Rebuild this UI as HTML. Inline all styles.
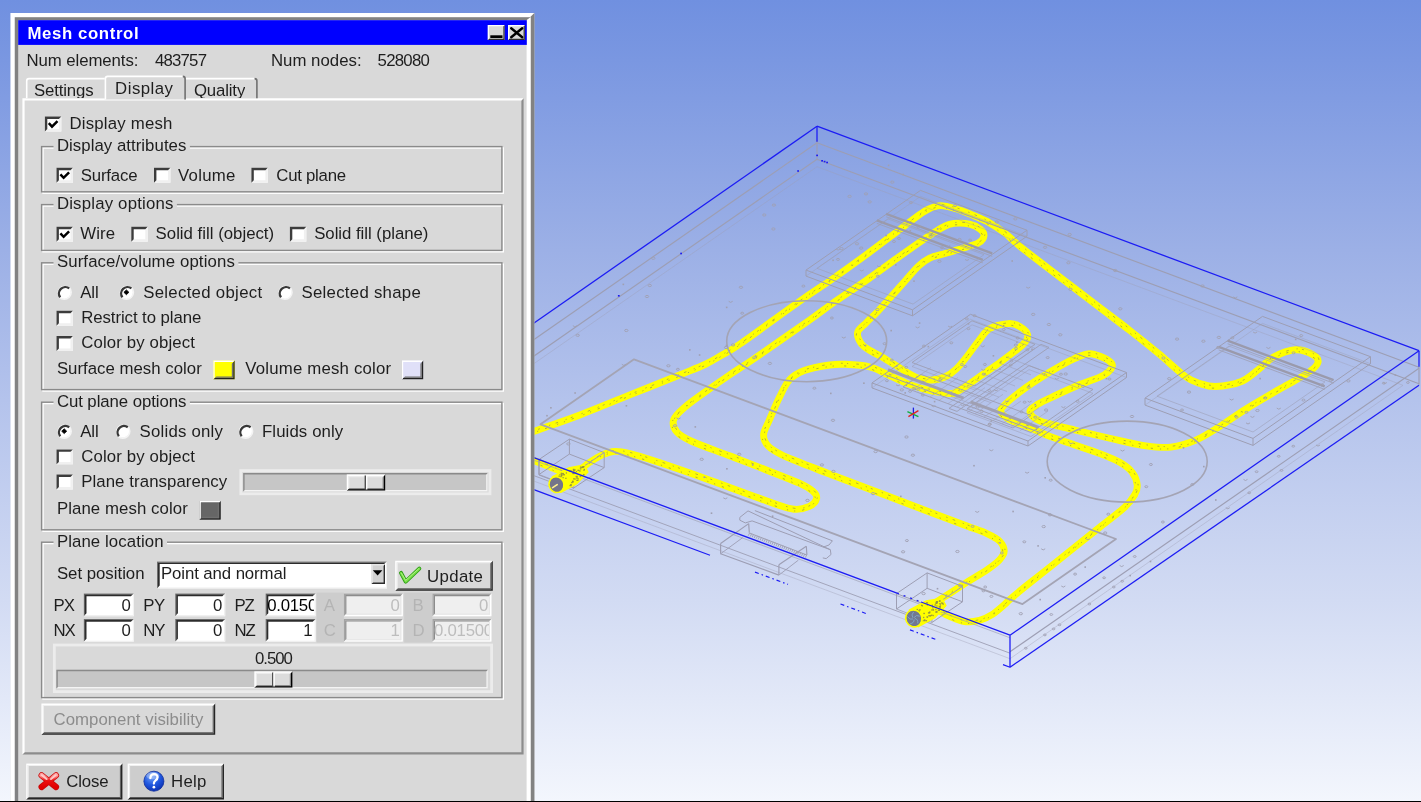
<!DOCTYPE html>
<html><head><meta charset="utf-8"><title>Mesh control</title>
<style>
html,body{margin:0;padding:0;}
body{width:1421px;height:802px;overflow:hidden;position:relative;background:#fff;font-family:"Liberation Sans",sans-serif;}
#bg{position:absolute;left:0;top:0;width:1421px;height:802px;background:linear-gradient(to bottom,#7090e0 0px,#7a97e1 60px,#9cb0e6 250px,#b4c3ec 400px,#d2dbf3 600px,#f3f6fd 801px);}
#scene{position:absolute;left:0;top:0;}
#dlg{position:absolute;left:0;top:0;}
.t{position:absolute;font-family:"Liberation Sans",sans-serif;font-size:16.8px;line-height:20px;white-space:nowrap;color:#1e1e1e;}
.gl{background:#d9d9d9;padding:0 3px;height:16px;line-height:20px;overflow:visible;}
#txt{position:absolute;left:0;top:0;width:540px;height:802px;filter:blur(0.35px);}
#dlg{filter:blur(0.3px);}
#scene{filter:blur(0.4px);}
#bl{position:absolute;left:0;top:801px;width:1421px;height:1px;background:#000;}
</style></head><body>
<div id="bg"></div>
<svg id="scene" width="1421" height="802" viewBox="0 0 1421 802">
<path d="M516.0 438.0 C519.2 436.9 524.4 435.0 535.0 431.1 C545.6 427.2 564.1 420.9 579.9 414.9 C595.7 408.9 613.2 401.5 629.8 394.9 C646.4 388.2 667.1 380.1 679.6 375.0 C692.1 369.9 697.9 367.8 705.0 364.5 C712.1 361.2 716.2 358.4 722.0 355.0 C727.8 351.6 727.0 353.0 740.0 344.0 C753.0 335.0 784.6 311.8 800.0 301.0 C815.4 290.2 821.6 286.5 832.4 279.0 C843.2 271.5 854.0 263.7 864.8 255.8 C875.6 247.9 889.1 237.6 897.2 231.5 C905.3 225.4 908.5 222.7 913.5 219.0 C918.5 215.3 923.0 211.8 927.5 209.6 C932.0 207.4 935.8 205.7 940.5 205.6 C945.2 205.5 950.9 207.3 956.0 208.8 C961.1 210.3 965.4 212.1 971.0 214.4 C976.6 216.8 984.1 219.8 989.7 222.9 C995.3 226.0 999.7 229.0 1004.7 232.9 C1009.8 236.8 1010.8 239.0 1020.0 246.4 C1029.2 253.8 1046.7 267.0 1060.0 277.2 C1073.3 287.4 1088.3 298.9 1100.0 307.8 C1111.7 316.7 1120.3 323.0 1130.0 330.6 C1139.7 338.2 1149.1 345.7 1158.4 353.4 C1167.7 361.1 1178.9 371.8 1185.8 376.8 C1192.7 381.8 1195.0 381.9 1200.0 383.5 C1205.0 385.1 1209.0 386.8 1215.8 386.5 C1222.6 386.2 1233.6 384.6 1240.7 381.8 C1247.8 379.0 1252.8 373.9 1258.2 369.8 C1263.6 365.7 1266.9 360.6 1273.1 357.3 C1279.3 354.0 1288.9 350.2 1295.6 349.8 C1302.2 349.4 1309.3 352.7 1313.0 354.8 C1316.7 356.9 1318.8 359.3 1318.0 362.3 C1317.2 365.3 1314.2 368.4 1308.0 372.8 C1301.8 377.2 1291.0 382.5 1280.6 388.6 C1270.2 394.7 1255.7 403.0 1245.7 409.2 C1235.7 415.4 1229.1 420.6 1220.8 425.8 C1212.5 431.0 1204.1 436.6 1195.8 440.2 C1187.5 443.8 1179.2 446.2 1170.9 447.1 C1162.6 448.0 1154.2 446.9 1145.9 445.8 C1137.6 444.8 1132.8 443.4 1121.0 440.8 C1109.2 438.2 1088.3 433.3 1074.8 430.0 C1061.3 426.7 1047.5 424.0 1040.0 421.0 C1032.5 418.0 1030.5 414.9 1030.0 412.2 C1029.5 409.5 1032.9 407.4 1037.0 404.7 C1041.1 402.0 1047.3 399.3 1054.4 396.0 C1061.5 392.7 1071.1 388.3 1079.4 384.8 C1087.7 381.3 1098.9 378.3 1104.3 374.8 C1109.7 371.3 1113.9 367.1 1111.8 363.6 C1109.7 360.1 1098.0 354.6 1091.8 353.8 C1085.6 353.0 1081.5 355.5 1074.4 358.6 C1067.4 361.7 1058.7 366.7 1049.5 372.3 C1040.3 377.9 1027.6 386.1 1019.5 392.3 C1011.4 398.5 1002.6 405.1 1001.0 409.7 C999.4 414.3 1005.6 417.1 1009.6 419.7 C1013.6 422.3 1018.3 422.7 1025.0 425.5 C1031.7 428.3 1041.6 433.2 1049.9 436.4 C1058.2 439.6 1066.5 442.0 1074.8 444.9 C1083.1 447.8 1092.3 450.7 1099.8 453.6 C1107.3 456.5 1114.3 459.2 1119.7 462.3 C1125.1 465.4 1129.3 468.6 1132.2 472.3 C1135.1 476.1 1136.8 481.1 1137.2 484.8 C1137.6 488.6 1136.8 491.1 1134.7 494.8 C1132.6 498.5 1130.5 501.8 1124.7 507.2 C1118.9 512.6 1108.1 520.6 1099.8 527.2 C1091.5 533.9 1083.1 540.5 1074.8 547.1 C1066.5 553.8 1058.2 560.5 1049.9 567.1 C1041.6 573.7 1031.7 581.4 1025.0 586.8 C1018.4 592.2 1013.4 596.3 1010.0 599.3 C1006.6 602.3 1007.4 602.1 1004.4 604.7 C1001.4 607.3 996.1 612.1 992.0 614.7 C987.9 617.3 984.1 619.2 979.5 620.4 C974.9 621.5 969.5 622.3 964.5 621.6 C959.5 620.9 954.6 618.5 949.6 616.4 C944.6 614.3 938.5 609.8 934.6 609.2 C930.7 608.6 927.4 612.4 926.0 613.0" fill="none" stroke="#ffff00" stroke-width="6.9" stroke-linecap="round" stroke-linejoin="round"/>
<path d="M566.0 478.0 C568.3 476.6 575.9 472.3 579.9 469.7 C583.9 467.1 586.2 464.7 589.9 462.2 C593.6 459.7 598.1 456.6 602.3 454.8 C606.4 453.0 610.2 451.6 614.8 451.4 C619.4 451.2 623.1 451.9 629.8 453.5 C636.4 455.1 642.2 456.9 654.7 461.0 C667.2 465.1 688.0 472.3 704.6 478.2 C721.2 484.1 739.9 491.3 754.4 496.4 C768.9 501.5 782.6 507.2 791.8 508.9 C800.9 510.6 805.2 508.1 809.3 506.4 C813.4 504.6 816.0 500.9 816.6 498.4 C817.2 495.9 815.7 493.7 812.8 491.2 C809.9 488.7 806.9 486.7 799.3 483.2 C791.6 479.7 778.5 474.8 766.9 470.2 C755.3 465.6 742.0 460.6 729.5 455.8 C717.0 451.0 700.8 445.4 692.1 441.5 C683.4 437.6 680.2 435.9 677.1 432.3 C674.0 428.7 672.4 424.0 673.6 419.9 C674.9 415.8 679.4 412.0 684.6 407.4 C689.8 402.8 697.1 397.8 704.6 392.4 C712.1 387.0 721.2 380.6 729.5 375.0 C737.8 369.4 741.0 367.7 754.4 358.5 C767.8 349.3 796.7 329.2 809.7 320.0 C822.7 310.8 823.2 309.9 832.4 303.5 C841.6 297.1 854.0 289.0 864.8 281.4 C875.6 273.8 886.4 265.8 897.2 258.1 C908.0 250.4 922.1 240.5 929.7 235.4 C937.3 230.3 938.6 229.3 942.6 227.3 C946.6 225.3 949.5 223.9 954.0 223.4 C958.5 222.9 965.2 223.2 969.6 224.2 C974.0 225.2 977.9 227.3 980.3 229.2 C982.7 231.1 984.2 233.3 984.0 235.6 C983.8 237.8 981.9 240.7 978.8 242.7 C975.7 244.7 970.8 245.8 965.3 247.5 C959.8 249.2 951.8 251.4 945.9 253.2 C940.0 255.0 934.3 255.9 929.7 258.1 C925.1 260.3 922.4 262.4 918.3 266.2 C914.2 270.0 909.9 275.7 905.3 280.8 C900.7 285.9 895.4 291.9 890.8 297.0 C886.2 302.1 881.9 307.1 877.8 311.4 C873.7 315.7 869.8 319.1 866.4 322.6 C863.0 326.1 858.4 328.8 857.6 332.4 C856.8 336.0 859.4 341.0 861.5 344.0 C863.6 347.0 866.7 348.4 870.0 350.5 C873.3 352.6 877.2 354.3 881.2 356.6 C885.2 358.9 888.4 361.0 894.3 364.5 C900.2 368.0 910.6 375.0 916.8 377.6 C923.0 380.2 927.0 380.1 931.7 380.0 C936.4 379.9 940.8 378.8 944.8 377.0 C948.8 375.2 952.2 372.7 956.0 369.2 C959.8 365.7 963.5 360.8 967.3 356.1 C971.0 351.4 974.8 345.8 978.5 341.2 C982.2 336.6 984.7 331.5 989.7 328.6 C994.7 325.7 1003.4 324.0 1008.4 323.6 C1013.4 323.2 1016.4 324.6 1019.6 326.4 C1022.8 328.2 1027.0 331.7 1027.6 334.6 C1028.2 337.5 1027.8 339.5 1023.4 344.0 C1019.0 348.5 1007.8 356.6 1000.9 361.7 C994.0 366.8 988.4 370.4 982.2 374.8 C976.0 379.2 968.3 384.8 963.5 387.9 C958.7 391.0 954.9 392.5 953.2 393.4" fill="none" stroke="#ffff00" stroke-width="6.9" stroke-linecap="round" stroke-linejoin="round"/>
<path d="M953.2 393.4 C951.8 393.4 949.3 393.8 944.8 393.2 C940.3 392.6 932.3 391.2 926.1 389.6 C919.9 388.0 913.6 386.0 907.4 383.6 C901.2 381.2 894.9 378.0 888.7 375.2 C882.5 372.4 877.3 368.8 870.0 367.0 C862.7 365.2 851.7 364.6 845.0 364.3 C838.3 364.0 836.8 364.0 830.0 365.0 C823.2 366.0 811.1 368.0 804.3 370.5 C797.5 373.0 793.5 375.5 789.4 380.0 C785.2 384.5 782.7 390.8 779.4 397.4 C776.1 404.0 772.0 413.7 769.4 419.9 C766.8 426.1 763.8 430.4 763.6 434.8 C763.4 439.2 765.3 442.9 768.4 446.3 C771.5 449.7 776.7 452.3 782.0 455.0 C787.3 457.7 790.8 458.8 800.0 462.5 C809.2 466.2 824.1 471.9 837.4 477.0 C850.7 482.1 864.4 487.2 879.8 493.0 C895.2 498.8 915.1 506.5 929.6 512.0 C944.1 517.5 957.4 522.4 967.0 526.0 C976.6 529.6 981.6 531.1 987.0 533.6 C992.4 536.1 996.6 538.2 999.5 541.1 C1002.4 544.0 1004.2 548.0 1004.2 551.1 C1004.2 554.2 1002.4 556.7 999.5 559.8 C996.6 562.9 992.4 566.1 987.0 569.8 C981.6 573.5 973.2 578.2 967.0 582.2 C960.8 586.2 955.0 590.0 949.6 593.5 C944.2 597.0 938.7 600.5 934.6 603.2 C930.5 606.0 926.6 608.9 925.0 610.0" fill="none" stroke="#ffff00" stroke-width="6.9" stroke-linecap="round" stroke-linejoin="round"/>
<path d="M520.0 455.8 C523.3 457.0 532.3 460.1 540.0 463.0 C547.7 465.9 561.7 471.8 566.0 473.5" fill="none" stroke="#ffff00" stroke-width="6.9" stroke-linecap="round" stroke-linejoin="round"/>
<path d="M516.0 438.0 C519.2 436.9 524.4 435.0 535.0 431.1 C545.6 427.2 564.1 420.9 579.9 414.9 C595.7 408.9 613.2 401.5 629.8 394.9 C646.4 388.2 667.1 380.1 679.6 375.0 C692.1 369.9 697.9 367.8 705.0 364.5 C712.1 361.2 716.2 358.4 722.0 355.0 C727.8 351.6 727.0 353.0 740.0 344.0 C753.0 335.0 784.6 311.8 800.0 301.0 C815.4 290.2 821.6 286.5 832.4 279.0 C843.2 271.5 854.0 263.7 864.8 255.8 C875.6 247.9 889.1 237.6 897.2 231.5 C905.3 225.4 908.5 222.7 913.5 219.0 C918.5 215.3 923.0 211.8 927.5 209.6 C932.0 207.4 935.8 205.7 940.5 205.6 C945.2 205.5 950.9 207.3 956.0 208.8 C961.1 210.3 965.4 212.1 971.0 214.4 C976.6 216.8 984.1 219.8 989.7 222.9 C995.3 226.0 999.7 229.0 1004.7 232.9 C1009.8 236.8 1010.8 239.0 1020.0 246.4 C1029.2 253.8 1046.7 267.0 1060.0 277.2 C1073.3 287.4 1088.3 298.9 1100.0 307.8 C1111.7 316.7 1120.3 323.0 1130.0 330.6 C1139.7 338.2 1149.1 345.7 1158.4 353.4 C1167.7 361.1 1178.9 371.8 1185.8 376.8 C1192.7 381.8 1195.0 381.9 1200.0 383.5 C1205.0 385.1 1209.0 386.8 1215.8 386.5 C1222.6 386.2 1233.6 384.6 1240.7 381.8 C1247.8 379.0 1252.8 373.9 1258.2 369.8 C1263.6 365.7 1266.9 360.6 1273.1 357.3 C1279.3 354.0 1288.9 350.2 1295.6 349.8 C1302.2 349.4 1309.3 352.7 1313.0 354.8 C1316.7 356.9 1318.8 359.3 1318.0 362.3 C1317.2 365.3 1314.2 368.4 1308.0 372.8 C1301.8 377.2 1291.0 382.5 1280.6 388.6 C1270.2 394.7 1255.7 403.0 1245.7 409.2 C1235.7 415.4 1229.1 420.6 1220.8 425.8 C1212.5 431.0 1204.1 436.6 1195.8 440.2 C1187.5 443.8 1179.2 446.2 1170.9 447.1 C1162.6 448.0 1154.2 446.9 1145.9 445.8 C1137.6 444.8 1132.8 443.4 1121.0 440.8 C1109.2 438.2 1088.3 433.3 1074.8 430.0 C1061.3 426.7 1047.5 424.0 1040.0 421.0 C1032.5 418.0 1030.5 414.9 1030.0 412.2 C1029.5 409.5 1032.9 407.4 1037.0 404.7 C1041.1 402.0 1047.3 399.3 1054.4 396.0 C1061.5 392.7 1071.1 388.3 1079.4 384.8 C1087.7 381.3 1098.9 378.3 1104.3 374.8 C1109.7 371.3 1113.9 367.1 1111.8 363.6 C1109.7 360.1 1098.0 354.6 1091.8 353.8 C1085.6 353.0 1081.5 355.5 1074.4 358.6 C1067.4 361.7 1058.7 366.7 1049.5 372.3 C1040.3 377.9 1027.6 386.1 1019.5 392.3 C1011.4 398.5 1002.6 405.1 1001.0 409.7 C999.4 414.3 1005.6 417.1 1009.6 419.7 C1013.6 422.3 1018.3 422.7 1025.0 425.5 C1031.7 428.3 1041.6 433.2 1049.9 436.4 C1058.2 439.6 1066.5 442.0 1074.8 444.9 C1083.1 447.8 1092.3 450.7 1099.8 453.6 C1107.3 456.5 1114.3 459.2 1119.7 462.3 C1125.1 465.4 1129.3 468.6 1132.2 472.3 C1135.1 476.1 1136.8 481.1 1137.2 484.8 C1137.6 488.6 1136.8 491.1 1134.7 494.8 C1132.6 498.5 1130.5 501.8 1124.7 507.2 C1118.9 512.6 1108.1 520.6 1099.8 527.2 C1091.5 533.9 1083.1 540.5 1074.8 547.1 C1066.5 553.8 1058.2 560.5 1049.9 567.1 C1041.6 573.7 1031.7 581.4 1025.0 586.8 C1018.4 592.2 1013.4 596.3 1010.0 599.3 C1006.6 602.3 1007.4 602.1 1004.4 604.7 C1001.4 607.3 996.1 612.1 992.0 614.7 C987.9 617.3 984.1 619.2 979.5 620.4 C974.9 621.5 969.5 622.3 964.5 621.6 C959.5 620.9 954.6 618.5 949.6 616.4 C944.6 614.3 938.5 609.8 934.6 609.2 C930.7 608.6 927.4 612.4 926.0 613.0" fill="none" stroke="#8e8e4c" stroke-width="0.9" stroke-dasharray="1.4 5.5 2.6 8 1.2 4.2 2.0 9.5" stroke-dashoffset="0" transform="translate(0.8,-0.9)" opacity="0.7"/>
<path d="M516.0 438.0 C519.2 436.9 524.4 435.0 535.0 431.1 C545.6 427.2 564.1 420.9 579.9 414.9 C595.7 408.9 613.2 401.5 629.8 394.9 C646.4 388.2 667.1 380.1 679.6 375.0 C692.1 369.9 697.9 367.8 705.0 364.5 C712.1 361.2 716.2 358.4 722.0 355.0 C727.8 351.6 727.0 353.0 740.0 344.0 C753.0 335.0 784.6 311.8 800.0 301.0 C815.4 290.2 821.6 286.5 832.4 279.0 C843.2 271.5 854.0 263.7 864.8 255.8 C875.6 247.9 889.1 237.6 897.2 231.5 C905.3 225.4 908.5 222.7 913.5 219.0 C918.5 215.3 923.0 211.8 927.5 209.6 C932.0 207.4 935.8 205.7 940.5 205.6 C945.2 205.5 950.9 207.3 956.0 208.8 C961.1 210.3 965.4 212.1 971.0 214.4 C976.6 216.8 984.1 219.8 989.7 222.9 C995.3 226.0 999.7 229.0 1004.7 232.9 C1009.8 236.8 1010.8 239.0 1020.0 246.4 C1029.2 253.8 1046.7 267.0 1060.0 277.2 C1073.3 287.4 1088.3 298.9 1100.0 307.8 C1111.7 316.7 1120.3 323.0 1130.0 330.6 C1139.7 338.2 1149.1 345.7 1158.4 353.4 C1167.7 361.1 1178.9 371.8 1185.8 376.8 C1192.7 381.8 1195.0 381.9 1200.0 383.5 C1205.0 385.1 1209.0 386.8 1215.8 386.5 C1222.6 386.2 1233.6 384.6 1240.7 381.8 C1247.8 379.0 1252.8 373.9 1258.2 369.8 C1263.6 365.7 1266.9 360.6 1273.1 357.3 C1279.3 354.0 1288.9 350.2 1295.6 349.8 C1302.2 349.4 1309.3 352.7 1313.0 354.8 C1316.7 356.9 1318.8 359.3 1318.0 362.3 C1317.2 365.3 1314.2 368.4 1308.0 372.8 C1301.8 377.2 1291.0 382.5 1280.6 388.6 C1270.2 394.7 1255.7 403.0 1245.7 409.2 C1235.7 415.4 1229.1 420.6 1220.8 425.8 C1212.5 431.0 1204.1 436.6 1195.8 440.2 C1187.5 443.8 1179.2 446.2 1170.9 447.1 C1162.6 448.0 1154.2 446.9 1145.9 445.8 C1137.6 444.8 1132.8 443.4 1121.0 440.8 C1109.2 438.2 1088.3 433.3 1074.8 430.0 C1061.3 426.7 1047.5 424.0 1040.0 421.0 C1032.5 418.0 1030.5 414.9 1030.0 412.2 C1029.5 409.5 1032.9 407.4 1037.0 404.7 C1041.1 402.0 1047.3 399.3 1054.4 396.0 C1061.5 392.7 1071.1 388.3 1079.4 384.8 C1087.7 381.3 1098.9 378.3 1104.3 374.8 C1109.7 371.3 1113.9 367.1 1111.8 363.6 C1109.7 360.1 1098.0 354.6 1091.8 353.8 C1085.6 353.0 1081.5 355.5 1074.4 358.6 C1067.4 361.7 1058.7 366.7 1049.5 372.3 C1040.3 377.9 1027.6 386.1 1019.5 392.3 C1011.4 398.5 1002.6 405.1 1001.0 409.7 C999.4 414.3 1005.6 417.1 1009.6 419.7 C1013.6 422.3 1018.3 422.7 1025.0 425.5 C1031.7 428.3 1041.6 433.2 1049.9 436.4 C1058.2 439.6 1066.5 442.0 1074.8 444.9 C1083.1 447.8 1092.3 450.7 1099.8 453.6 C1107.3 456.5 1114.3 459.2 1119.7 462.3 C1125.1 465.4 1129.3 468.6 1132.2 472.3 C1135.1 476.1 1136.8 481.1 1137.2 484.8 C1137.6 488.6 1136.8 491.1 1134.7 494.8 C1132.6 498.5 1130.5 501.8 1124.7 507.2 C1118.9 512.6 1108.1 520.6 1099.8 527.2 C1091.5 533.9 1083.1 540.5 1074.8 547.1 C1066.5 553.8 1058.2 560.5 1049.9 567.1 C1041.6 573.7 1031.7 581.4 1025.0 586.8 C1018.4 592.2 1013.4 596.3 1010.0 599.3 C1006.6 602.3 1007.4 602.1 1004.4 604.7 C1001.4 607.3 996.1 612.1 992.0 614.7 C987.9 617.3 984.1 619.2 979.5 620.4 C974.9 621.5 969.5 622.3 964.5 621.6 C959.5 620.9 954.6 618.5 949.6 616.4 C944.6 614.3 938.5 609.8 934.6 609.2 C930.7 608.6 927.4 612.4 926.0 613.0" fill="none" stroke="#8c8c44" stroke-width="1.0" stroke-dasharray="1.2 7 2.2 10.5 1.2 6" stroke-dashoffset="4" transform="translate(-1.2,1.6)" opacity="0.65"/>
<path d="M566.0 478.0 C568.3 476.6 575.9 472.3 579.9 469.7 C583.9 467.1 586.2 464.7 589.9 462.2 C593.6 459.7 598.1 456.6 602.3 454.8 C606.4 453.0 610.2 451.6 614.8 451.4 C619.4 451.2 623.1 451.9 629.8 453.5 C636.4 455.1 642.2 456.9 654.7 461.0 C667.2 465.1 688.0 472.3 704.6 478.2 C721.2 484.1 739.9 491.3 754.4 496.4 C768.9 501.5 782.6 507.2 791.8 508.9 C800.9 510.6 805.2 508.1 809.3 506.4 C813.4 504.6 816.0 500.9 816.6 498.4 C817.2 495.9 815.7 493.7 812.8 491.2 C809.9 488.7 806.9 486.7 799.3 483.2 C791.6 479.7 778.5 474.8 766.9 470.2 C755.3 465.6 742.0 460.6 729.5 455.8 C717.0 451.0 700.8 445.4 692.1 441.5 C683.4 437.6 680.2 435.9 677.1 432.3 C674.0 428.7 672.4 424.0 673.6 419.9 C674.9 415.8 679.4 412.0 684.6 407.4 C689.8 402.8 697.1 397.8 704.6 392.4 C712.1 387.0 721.2 380.6 729.5 375.0 C737.8 369.4 741.0 367.7 754.4 358.5 C767.8 349.3 796.7 329.2 809.7 320.0 C822.7 310.8 823.2 309.9 832.4 303.5 C841.6 297.1 854.0 289.0 864.8 281.4 C875.6 273.8 886.4 265.8 897.2 258.1 C908.0 250.4 922.1 240.5 929.7 235.4 C937.3 230.3 938.6 229.3 942.6 227.3 C946.6 225.3 949.5 223.9 954.0 223.4 C958.5 222.9 965.2 223.2 969.6 224.2 C974.0 225.2 977.9 227.3 980.3 229.2 C982.7 231.1 984.2 233.3 984.0 235.6 C983.8 237.8 981.9 240.7 978.8 242.7 C975.7 244.7 970.8 245.8 965.3 247.5 C959.8 249.2 951.8 251.4 945.9 253.2 C940.0 255.0 934.3 255.9 929.7 258.1 C925.1 260.3 922.4 262.4 918.3 266.2 C914.2 270.0 909.9 275.7 905.3 280.8 C900.7 285.9 895.4 291.9 890.8 297.0 C886.2 302.1 881.9 307.1 877.8 311.4 C873.7 315.7 869.8 319.1 866.4 322.6 C863.0 326.1 858.4 328.8 857.6 332.4 C856.8 336.0 859.4 341.0 861.5 344.0 C863.6 347.0 866.7 348.4 870.0 350.5 C873.3 352.6 877.2 354.3 881.2 356.6 C885.2 358.9 888.4 361.0 894.3 364.5 C900.2 368.0 910.6 375.0 916.8 377.6 C923.0 380.2 927.0 380.1 931.7 380.0 C936.4 379.9 940.8 378.8 944.8 377.0 C948.8 375.2 952.2 372.7 956.0 369.2 C959.8 365.7 963.5 360.8 967.3 356.1 C971.0 351.4 974.8 345.8 978.5 341.2 C982.2 336.6 984.7 331.5 989.7 328.6 C994.7 325.7 1003.4 324.0 1008.4 323.6 C1013.4 323.2 1016.4 324.6 1019.6 326.4 C1022.8 328.2 1027.0 331.7 1027.6 334.6 C1028.2 337.5 1027.8 339.5 1023.4 344.0 C1019.0 348.5 1007.8 356.6 1000.9 361.7 C994.0 366.8 988.4 370.4 982.2 374.8 C976.0 379.2 968.3 384.8 963.5 387.9 C958.7 391.0 954.9 392.5 953.2 393.4" fill="none" stroke="#8e8e4c" stroke-width="0.9" stroke-dasharray="1.4 5.5 2.6 8 1.2 4.2 2.0 9.5" stroke-dashoffset="5" transform="translate(0.8,-0.9)" opacity="0.7"/>
<path d="M566.0 478.0 C568.3 476.6 575.9 472.3 579.9 469.7 C583.9 467.1 586.2 464.7 589.9 462.2 C593.6 459.7 598.1 456.6 602.3 454.8 C606.4 453.0 610.2 451.6 614.8 451.4 C619.4 451.2 623.1 451.9 629.8 453.5 C636.4 455.1 642.2 456.9 654.7 461.0 C667.2 465.1 688.0 472.3 704.6 478.2 C721.2 484.1 739.9 491.3 754.4 496.4 C768.9 501.5 782.6 507.2 791.8 508.9 C800.9 510.6 805.2 508.1 809.3 506.4 C813.4 504.6 816.0 500.9 816.6 498.4 C817.2 495.9 815.7 493.7 812.8 491.2 C809.9 488.7 806.9 486.7 799.3 483.2 C791.6 479.7 778.5 474.8 766.9 470.2 C755.3 465.6 742.0 460.6 729.5 455.8 C717.0 451.0 700.8 445.4 692.1 441.5 C683.4 437.6 680.2 435.9 677.1 432.3 C674.0 428.7 672.4 424.0 673.6 419.9 C674.9 415.8 679.4 412.0 684.6 407.4 C689.8 402.8 697.1 397.8 704.6 392.4 C712.1 387.0 721.2 380.6 729.5 375.0 C737.8 369.4 741.0 367.7 754.4 358.5 C767.8 349.3 796.7 329.2 809.7 320.0 C822.7 310.8 823.2 309.9 832.4 303.5 C841.6 297.1 854.0 289.0 864.8 281.4 C875.6 273.8 886.4 265.8 897.2 258.1 C908.0 250.4 922.1 240.5 929.7 235.4 C937.3 230.3 938.6 229.3 942.6 227.3 C946.6 225.3 949.5 223.9 954.0 223.4 C958.5 222.9 965.2 223.2 969.6 224.2 C974.0 225.2 977.9 227.3 980.3 229.2 C982.7 231.1 984.2 233.3 984.0 235.6 C983.8 237.8 981.9 240.7 978.8 242.7 C975.7 244.7 970.8 245.8 965.3 247.5 C959.8 249.2 951.8 251.4 945.9 253.2 C940.0 255.0 934.3 255.9 929.7 258.1 C925.1 260.3 922.4 262.4 918.3 266.2 C914.2 270.0 909.9 275.7 905.3 280.8 C900.7 285.9 895.4 291.9 890.8 297.0 C886.2 302.1 881.9 307.1 877.8 311.4 C873.7 315.7 869.8 319.1 866.4 322.6 C863.0 326.1 858.4 328.8 857.6 332.4 C856.8 336.0 859.4 341.0 861.5 344.0 C863.6 347.0 866.7 348.4 870.0 350.5 C873.3 352.6 877.2 354.3 881.2 356.6 C885.2 358.9 888.4 361.0 894.3 364.5 C900.2 368.0 910.6 375.0 916.8 377.6 C923.0 380.2 927.0 380.1 931.7 380.0 C936.4 379.9 940.8 378.8 944.8 377.0 C948.8 375.2 952.2 372.7 956.0 369.2 C959.8 365.7 963.5 360.8 967.3 356.1 C971.0 351.4 974.8 345.8 978.5 341.2 C982.2 336.6 984.7 331.5 989.7 328.6 C994.7 325.7 1003.4 324.0 1008.4 323.6 C1013.4 323.2 1016.4 324.6 1019.6 326.4 C1022.8 328.2 1027.0 331.7 1027.6 334.6 C1028.2 337.5 1027.8 339.5 1023.4 344.0 C1019.0 348.5 1007.8 356.6 1000.9 361.7 C994.0 366.8 988.4 370.4 982.2 374.8 C976.0 379.2 968.3 384.8 963.5 387.9 C958.7 391.0 954.9 392.5 953.2 393.4" fill="none" stroke="#8c8c44" stroke-width="1.0" stroke-dasharray="1.2 7 2.2 10.5 1.2 6" stroke-dashoffset="7" transform="translate(-1.2,1.6)" opacity="0.65"/>
<path d="M953.2 393.4 C951.8 393.4 949.3 393.8 944.8 393.2 C940.3 392.6 932.3 391.2 926.1 389.6 C919.9 388.0 913.6 386.0 907.4 383.6 C901.2 381.2 894.9 378.0 888.7 375.2 C882.5 372.4 877.3 368.8 870.0 367.0 C862.7 365.2 851.7 364.6 845.0 364.3 C838.3 364.0 836.8 364.0 830.0 365.0 C823.2 366.0 811.1 368.0 804.3 370.5 C797.5 373.0 793.5 375.5 789.4 380.0 C785.2 384.5 782.7 390.8 779.4 397.4 C776.1 404.0 772.0 413.7 769.4 419.9 C766.8 426.1 763.8 430.4 763.6 434.8 C763.4 439.2 765.3 442.9 768.4 446.3 C771.5 449.7 776.7 452.3 782.0 455.0 C787.3 457.7 790.8 458.8 800.0 462.5 C809.2 466.2 824.1 471.9 837.4 477.0 C850.7 482.1 864.4 487.2 879.8 493.0 C895.2 498.8 915.1 506.5 929.6 512.0 C944.1 517.5 957.4 522.4 967.0 526.0 C976.6 529.6 981.6 531.1 987.0 533.6 C992.4 536.1 996.6 538.2 999.5 541.1 C1002.4 544.0 1004.2 548.0 1004.2 551.1 C1004.2 554.2 1002.4 556.7 999.5 559.8 C996.6 562.9 992.4 566.1 987.0 569.8 C981.6 573.5 973.2 578.2 967.0 582.2 C960.8 586.2 955.0 590.0 949.6 593.5 C944.2 597.0 938.7 600.5 934.6 603.2 C930.5 606.0 926.6 608.9 925.0 610.0" fill="none" stroke="#8e8e4c" stroke-width="0.9" stroke-dasharray="1.4 5.5 2.6 8 1.2 4.2 2.0 9.5" stroke-dashoffset="10" transform="translate(0.8,-0.9)" opacity="0.7"/>
<path d="M953.2 393.4 C951.8 393.4 949.3 393.8 944.8 393.2 C940.3 392.6 932.3 391.2 926.1 389.6 C919.9 388.0 913.6 386.0 907.4 383.6 C901.2 381.2 894.9 378.0 888.7 375.2 C882.5 372.4 877.3 368.8 870.0 367.0 C862.7 365.2 851.7 364.6 845.0 364.3 C838.3 364.0 836.8 364.0 830.0 365.0 C823.2 366.0 811.1 368.0 804.3 370.5 C797.5 373.0 793.5 375.5 789.4 380.0 C785.2 384.5 782.7 390.8 779.4 397.4 C776.1 404.0 772.0 413.7 769.4 419.9 C766.8 426.1 763.8 430.4 763.6 434.8 C763.4 439.2 765.3 442.9 768.4 446.3 C771.5 449.7 776.7 452.3 782.0 455.0 C787.3 457.7 790.8 458.8 800.0 462.5 C809.2 466.2 824.1 471.9 837.4 477.0 C850.7 482.1 864.4 487.2 879.8 493.0 C895.2 498.8 915.1 506.5 929.6 512.0 C944.1 517.5 957.4 522.4 967.0 526.0 C976.6 529.6 981.6 531.1 987.0 533.6 C992.4 536.1 996.6 538.2 999.5 541.1 C1002.4 544.0 1004.2 548.0 1004.2 551.1 C1004.2 554.2 1002.4 556.7 999.5 559.8 C996.6 562.9 992.4 566.1 987.0 569.8 C981.6 573.5 973.2 578.2 967.0 582.2 C960.8 586.2 955.0 590.0 949.6 593.5 C944.2 597.0 938.7 600.5 934.6 603.2 C930.5 606.0 926.6 608.9 925.0 610.0" fill="none" stroke="#8c8c44" stroke-width="1.0" stroke-dasharray="1.2 7 2.2 10.5 1.2 6" stroke-dashoffset="10" transform="translate(-1.2,1.6)" opacity="0.65"/>
<path d="M520.0 455.8 C523.3 457.0 532.3 460.1 540.0 463.0 C547.7 465.9 561.7 471.8 566.0 473.5" fill="none" stroke="#8e8e4c" stroke-width="0.9" stroke-dasharray="1.4 5.5 2.6 8 1.2 4.2 2.0 9.5" stroke-dashoffset="15" transform="translate(0.8,-0.9)" opacity="0.7"/>
<path d="M520.0 455.8 C523.3 457.0 532.3 460.1 540.0 463.0 C547.7 465.9 561.7 471.8 566.0 473.5" fill="none" stroke="#8c8c44" stroke-width="1.0" stroke-dasharray="1.2 7 2.2 10.5 1.2 6" stroke-dashoffset="13" transform="translate(-1.2,1.6)" opacity="0.65"/>
<line x1="817.0" y1="142.7" x2="408.0" y2="427.2" stroke="#9d9eb3" stroke-width="1.15" />
<line x1="817.0" y1="159.2" x2="408.0" y2="443.7" stroke="#9d9eb3" stroke-width="1.15" />
<line x1="817.0" y1="142.7" x2="1419.0" y2="367.2" stroke="#9d9eb3" stroke-width="1.15" />
<line x1="817.0" y1="159.2" x2="1419.0" y2="383.7" stroke="#9d9eb3" stroke-width="1.15" />
<line x1="817.0" y1="140.2" x2="817.0" y2="160.2" stroke="#9d9eb3" stroke-width="1.15" />
<line x1="1010.0" y1="651.7" x2="1419.0" y2="368.2" stroke="#9d9eb3" stroke-width="1.15" />
<line x1="1419.0" y1="366.7" x2="1419.0" y2="384.7" stroke="#9d9eb3" stroke-width="1.15" />
<path d="M817.0 166.7 L1403.0 385.3 L1010.0 658.7 L424.0 440.1 Z" fill="none" stroke="#9d9eb3" stroke-width="0.7" stroke-linejoin="round" opacity="0.55"/>
<path d="M634.0 359.3 L1116.0 539.0 L1022.5 604.1 L540.5 424.3 Z" fill="none" stroke="#a4a4b4" stroke-width="1.8" stroke-linejoin="round" />
<ellipse cx="806.7" cy="341.2" rx="80" ry="40.5" fill="none" stroke="#a4a4b4" stroke-width="1.6"/>
<ellipse cx="1127.2" cy="461.6" rx="80" ry="40.5" fill="none" stroke="#a4a4b4" stroke-width="1.6"/>
<path d="M920.5 190.4 L1027.0 230.2 L912.5 309.8 L806.0 270.1 Z" fill="none" stroke="#9d9eb3" stroke-width="1.0" stroke-linejoin="round" />
<path d="M806.0 270.1 L806.0 276.1 L912.5 315.8 L1027.0 236.2 L1027.0 230.2" fill="none" stroke="#9d9eb3" stroke-width="1.0" stroke-linejoin="round" />
<line x1="912.5" y1="309.8" x2="912.5" y2="315.8" stroke="#9d9eb3" stroke-width="1.0" />
<path d="M806.0 276.1 L920.5 196.4 L1027.0 236.2" fill="none" stroke="#9d9eb3" stroke-width="0.7" stroke-linejoin="round" opacity="0.6"/>
<path d="M1262.5 316.4 L1370.5 356.7 L1253.0 438.4 L1145.0 398.1 Z" fill="none" stroke="#9d9eb3" stroke-width="1.0" stroke-linejoin="round" />
<path d="M1145.0 398.1 L1145.0 405.1 L1253.0 445.4 L1370.5 363.7 L1370.5 356.7" fill="none" stroke="#9d9eb3" stroke-width="1.0" stroke-linejoin="round" />
<line x1="1253.0" y1="438.4" x2="1253.0" y2="445.4" stroke="#9d9eb3" stroke-width="1.0" />
<path d="M1145.0 405.1 L1262.5 323.4 L1370.5 363.7" fill="none" stroke="#9d9eb3" stroke-width="0.7" stroke-linejoin="round" opacity="0.6"/>
<line x1="886.2" y1="213.8" x2="992.2" y2="253.3" stroke="#9a9aac" stroke-width="2.3" />
<line x1="886.2" y1="216.8" x2="992.2" y2="256.3" stroke="#9d9eb3" stroke-width="0.8" />
<line x1="876.8" y1="220.3" x2="982.8" y2="259.8" stroke="#9a9aac" stroke-width="2.3" />
<line x1="876.8" y1="223.3" x2="982.8" y2="262.8" stroke="#9d9eb3" stroke-width="0.8" />
<line x1="1227.6" y1="340.7" x2="1333.6" y2="380.2" stroke="#9a9aac" stroke-width="2.3" />
<line x1="1227.6" y1="343.7" x2="1333.6" y2="383.2" stroke="#9d9eb3" stroke-width="0.8" />
<line x1="1218.7" y1="346.9" x2="1324.7" y2="386.4" stroke="#9a9aac" stroke-width="2.3" />
<line x1="1218.7" y1="349.9" x2="1324.7" y2="389.4" stroke="#9d9eb3" stroke-width="0.8" />
<path d="M888.0 218.9 L984.0 254.7 L913.0 304.1 L817.0 268.3 Z" fill="none" stroke="#9d9eb3" stroke-width="0.8" stroke-linejoin="round" opacity="0.7"/>
<path d="M1229.0 346.1 L1325.0 381.9 L1253.0 432.0 L1157.0 396.2 Z" fill="none" stroke="#9d9eb3" stroke-width="0.8" stroke-linejoin="round" opacity="0.7"/>
<path d="M970.5 314.3 L1126.5 372.5 L1028.0 441.0 L872.0 382.9 Z" fill="none" stroke="#9d9eb3" stroke-width="1.0" stroke-linejoin="round" />
<path d="M872.0 382.9 L872.0 387.9 L1028.0 446.0 L1126.5 377.5 L1126.5 372.5" fill="none" stroke="#9d9eb3" stroke-width="1.0" stroke-linejoin="round" />
<line x1="1028.0" y1="441.0" x2="1028.0" y2="446.0" stroke="#9d9eb3" stroke-width="1.0" />
<path d="M872.0 387.9 L970.5 319.3 L1126.5 377.5" fill="none" stroke="#9d9eb3" stroke-width="0.7" stroke-linejoin="round" opacity="0.6"/>
<path d="M972.0 320.8 L1035.0 344.3 L975.0 386.0 L912.0 362.5 Z" fill="none" stroke="#9d9eb3" stroke-width="0.9" stroke-linejoin="round" />
<path d="M972.0 324.8 L1035.0 348.3 L975.0 390.0 L912.0 366.5 Z" fill="none" stroke="#9d9eb3" stroke-width="0.7" stroke-linejoin="round" opacity="0.7"/>
<path d="M1029.0 365.6 L1093.0 389.4 L1031.0 432.5 L967.0 408.7 Z" fill="none" stroke="#9d9eb3" stroke-width="0.9" stroke-linejoin="round" />
<path d="M1029.0 369.6 L1093.0 393.4 L1031.0 436.5 L967.0 412.7 Z" fill="none" stroke="#9d9eb3" stroke-width="0.7" stroke-linejoin="round" opacity="0.7"/>
<path d="M921.0 374.4 L1031.0 415.4 L1013.0 428.0 L903.0 386.9 Z" fill="none" stroke="#9d9eb3" stroke-width="0.9" stroke-linejoin="round" />
<path d="M1041.0 344.4 L1049.0 347.4 L957.0 411.4 L949.0 408.4 Z" fill="none" stroke="#9d9eb3" stroke-width="0.9" stroke-linejoin="round" />
<line x1="888.0" y1="369.6" x2="963.6" y2="398.2" stroke="#a0a0b2" stroke-width="3.0" />
<line x1="970.6" y1="401.9" x2="1038.6" y2="427.3" stroke="#a0a0b2" stroke-width="3.0" />
<line x1="885.0" y1="374.7" x2="1041.0" y2="432.9" stroke="#9d9eb3" stroke-width="1.0" />
<line x1="931.0" y1="367.5" x2="903.0" y2="386.9" stroke="#9d9eb3" stroke-width="0.7" opacity="0.7"/>
<line x1="940.0" y1="370.8" x2="912.0" y2="390.3" stroke="#9d9eb3" stroke-width="0.7" opacity="0.7"/>
<line x1="949.0" y1="374.2" x2="921.0" y2="393.7" stroke="#9d9eb3" stroke-width="0.7" opacity="0.7"/>
<line x1="958.0" y1="377.5" x2="930.0" y2="397.0" stroke="#9d9eb3" stroke-width="0.7" opacity="0.7"/>
<line x1="967.0" y1="380.9" x2="939.0" y2="400.4" stroke="#9d9eb3" stroke-width="0.7" opacity="0.7"/>
<line x1="976.0" y1="384.2" x2="948.0" y2="403.7" stroke="#9d9eb3" stroke-width="0.7" opacity="0.7"/>
<line x1="985.0" y1="387.6" x2="957.0" y2="407.1" stroke="#9d9eb3" stroke-width="0.7" opacity="0.7"/>
<line x1="994.0" y1="391.0" x2="966.0" y2="410.4" stroke="#9d9eb3" stroke-width="0.7" opacity="0.7"/>
<line x1="1003.0" y1="394.3" x2="975.0" y2="413.8" stroke="#9d9eb3" stroke-width="0.7" opacity="0.7"/>
<line x1="1012.0" y1="397.7" x2="984.0" y2="417.1" stroke="#9d9eb3" stroke-width="0.7" opacity="0.7"/>
<line x1="1021.0" y1="401.0" x2="993.0" y2="420.5" stroke="#9d9eb3" stroke-width="0.7" opacity="0.7"/>
<line x1="1030.0" y1="404.4" x2="1002.0" y2="423.9" stroke="#9d9eb3" stroke-width="0.7" opacity="0.7"/>
<line x1="1039.0" y1="407.7" x2="1011.0" y2="427.2" stroke="#9d9eb3" stroke-width="0.7" opacity="0.7"/>
<line x1="1048.0" y1="411.1" x2="1020.0" y2="430.6" stroke="#9d9eb3" stroke-width="0.7" opacity="0.7"/>
<line x1="1007.0" y1="357.3" x2="1039.0" y2="369.3" stroke="#9d9eb3" stroke-width="0.7" opacity="0.7"/>
<line x1="999.0" y1="362.9" x2="1031.0" y2="374.8" stroke="#9d9eb3" stroke-width="0.7" opacity="0.7"/>
<line x1="991.0" y1="368.5" x2="1023.0" y2="380.4" stroke="#9d9eb3" stroke-width="0.7" opacity="0.7"/>
<line x1="983.0" y1="374.0" x2="1015.0" y2="386.0" stroke="#9d9eb3" stroke-width="0.7" opacity="0.7"/>
<line x1="975.0" y1="379.6" x2="1007.0" y2="391.5" stroke="#9d9eb3" stroke-width="0.7" opacity="0.7"/>
<line x1="967.0" y1="385.2" x2="999.0" y2="397.1" stroke="#9d9eb3" stroke-width="0.7" opacity="0.7"/>
<line x1="959.0" y1="390.7" x2="991.0" y2="402.7" stroke="#9d9eb3" stroke-width="0.7" opacity="0.7"/>
<line x1="951.0" y1="396.3" x2="983.0" y2="408.2" stroke="#9d9eb3" stroke-width="0.7" opacity="0.7"/>
<path d="M569.4 439.1 L604.2 452.6 L573.8 473.0 L539.0 459.5 Z" fill="none" stroke="#9d9eb3" stroke-width="1.0" stroke-linejoin="round" />
<line x1="569.4" y1="439.1" x2="569.4" y2="454.1" stroke="#9d9eb3" stroke-width="1.0" />
<line x1="604.2" y1="452.6" x2="604.2" y2="467.6" stroke="#9d9eb3" stroke-width="1.0" />
<line x1="573.8" y1="473.0" x2="573.8" y2="488.0" stroke="#9d9eb3" stroke-width="1.0" />
<line x1="539.0" y1="459.5" x2="539.0" y2="474.5" stroke="#9d9eb3" stroke-width="1.0" />
<path d="M539.0 474.5 L569.4 454.1 L604.2 467.6 L573.8 488.0" fill="none" stroke="#9d9eb3" stroke-width="1.0" stroke-linejoin="round" />
<line x1="539.0" y1="474.5" x2="573.8" y2="488.0" stroke="#9d9eb3" stroke-width="0.8" />
<path d="M927.1 572.9 L962.5 586.4 L931.9 607.1 L896.5 593.6 Z" fill="none" stroke="#9d9eb3" stroke-width="1.0" stroke-linejoin="round" />
<line x1="927.1" y1="572.9" x2="927.1" y2="588.3" stroke="#9d9eb3" stroke-width="1.0" />
<line x1="962.5" y1="586.4" x2="962.5" y2="601.8" stroke="#9d9eb3" stroke-width="1.0" />
<line x1="931.9" y1="607.1" x2="931.9" y2="622.5" stroke="#9d9eb3" stroke-width="1.0" />
<line x1="896.5" y1="593.6" x2="896.5" y2="609.0" stroke="#9d9eb3" stroke-width="1.0" />
<path d="M896.5 609.0 L927.1 588.3 L962.5 601.8 L931.9 622.5" fill="none" stroke="#9d9eb3" stroke-width="1.0" stroke-linejoin="round" />
<line x1="896.5" y1="609.0" x2="931.9" y2="622.5" stroke="#9d9eb3" stroke-width="0.8" />
<path d="M539.0 459.5 L539.0 475.0 L573.9 488.3" fill="none" stroke="#9d9eb3" stroke-width="1.0" stroke-linejoin="round" />
<line x1="720.6" y1="543.5" x2="748.7" y2="523.6" stroke="#9d9eb3" stroke-width="1.15" />
<line x1="720.6" y1="543.5" x2="720.6" y2="553.8" stroke="#9d9eb3" stroke-width="1.15" />
<line x1="748.7" y1="523.6" x2="749.3" y2="532.6" stroke="#9d9eb3" stroke-width="1.15" />
<line x1="778.9" y1="564.8" x2="778.9" y2="575.1" stroke="#9d9eb3" stroke-width="1.15" />
<line x1="806.3" y1="546.2" x2="806.9" y2="554.7" stroke="#9d9eb3" stroke-width="1.15" />
<line x1="778.9" y1="564.8" x2="806.3" y2="546.2" stroke="#9d9eb3" stroke-width="1.15" />
<line x1="720.6" y1="553.8" x2="778.9" y2="575.1" stroke="#9d9eb3" stroke-width="1.15" />
<line x1="720.6" y1="553.8" x2="742.7" y2="537.6" stroke="#9d9eb3" stroke-width="0.9" />
<line x1="778.9" y1="575.1" x2="798.3" y2="560.2" stroke="#9d9eb3" stroke-width="0.9" />
<line x1="749.7" y1="533.1" x2="806.8" y2="555.0" stroke="#a0a0b2" stroke-width="1.0" />
<line x1="749.7" y1="532.8" x2="748.3" y2="535.7" stroke="#a0a0b2" stroke-width="0.9" />
<line x1="751.7" y1="533.6" x2="750.3" y2="536.5" stroke="#a0a0b2" stroke-width="0.9" />
<line x1="753.6" y1="534.3" x2="752.2" y2="537.2" stroke="#a0a0b2" stroke-width="0.9" />
<line x1="755.6" y1="535.1" x2="754.2" y2="538.0" stroke="#a0a0b2" stroke-width="0.9" />
<line x1="757.6" y1="535.8" x2="756.2" y2="538.7" stroke="#a0a0b2" stroke-width="0.9" />
<line x1="759.5" y1="536.6" x2="758.1" y2="539.5" stroke="#a0a0b2" stroke-width="0.9" />
<line x1="761.5" y1="537.3" x2="760.1" y2="540.2" stroke="#a0a0b2" stroke-width="0.9" />
<line x1="763.5" y1="538.1" x2="762.1" y2="541.0" stroke="#a0a0b2" stroke-width="0.9" />
<line x1="765.5" y1="538.8" x2="764.1" y2="541.7" stroke="#a0a0b2" stroke-width="0.9" />
<line x1="767.4" y1="539.6" x2="766.0" y2="542.5" stroke="#a0a0b2" stroke-width="0.9" />
<line x1="769.4" y1="540.4" x2="768.0" y2="543.3" stroke="#a0a0b2" stroke-width="0.9" />
<line x1="771.4" y1="541.1" x2="770.0" y2="544.0" stroke="#a0a0b2" stroke-width="0.9" />
<line x1="773.3" y1="541.9" x2="771.9" y2="544.8" stroke="#a0a0b2" stroke-width="0.9" />
<line x1="775.3" y1="542.6" x2="773.9" y2="545.5" stroke="#a0a0b2" stroke-width="0.9" />
<line x1="777.3" y1="543.4" x2="775.9" y2="546.3" stroke="#a0a0b2" stroke-width="0.9" />
<line x1="779.2" y1="544.1" x2="777.8" y2="547.0" stroke="#a0a0b2" stroke-width="0.9" />
<line x1="781.2" y1="544.9" x2="779.8" y2="547.8" stroke="#a0a0b2" stroke-width="0.9" />
<line x1="783.2" y1="545.6" x2="781.8" y2="548.5" stroke="#a0a0b2" stroke-width="0.9" />
<line x1="785.1" y1="546.4" x2="783.7" y2="549.3" stroke="#a0a0b2" stroke-width="0.9" />
<line x1="787.1" y1="547.1" x2="785.7" y2="550.0" stroke="#a0a0b2" stroke-width="0.9" />
<line x1="789.1" y1="547.9" x2="787.7" y2="550.8" stroke="#a0a0b2" stroke-width="0.9" />
<line x1="791.0" y1="548.7" x2="789.6" y2="551.6" stroke="#a0a0b2" stroke-width="0.9" />
<line x1="793.0" y1="549.4" x2="791.6" y2="552.3" stroke="#a0a0b2" stroke-width="0.9" />
<line x1="795.0" y1="550.2" x2="793.6" y2="553.1" stroke="#a0a0b2" stroke-width="0.9" />
<line x1="797.0" y1="550.9" x2="795.6" y2="553.8" stroke="#a0a0b2" stroke-width="0.9" />
<line x1="798.9" y1="551.7" x2="797.5" y2="554.6" stroke="#a0a0b2" stroke-width="0.9" />
<line x1="800.9" y1="552.4" x2="799.5" y2="555.3" stroke="#a0a0b2" stroke-width="0.9" />
<line x1="802.9" y1="553.2" x2="801.5" y2="556.1" stroke="#a0a0b2" stroke-width="0.9" />
<line x1="804.8" y1="553.9" x2="803.4" y2="556.8" stroke="#a0a0b2" stroke-width="0.9" />
<line x1="806.8" y1="554.7" x2="805.4" y2="557.6" stroke="#a0a0b2" stroke-width="0.9" />
<path d="M754.9 510.6 L832.4 540.8 L829 545 L823.5 547 M830.3 549.7 L752.1 520.9 L745.3 522.9 L739.8 520.2 L739.8 517.4 L748 510.9 Z" fill="none" stroke="#9d9eb3" stroke-width="1.0"/>
<path d="M830.3 549.7 L831 554.5 L826.2 558.6 L822.8 557.9" fill="none" stroke="#9d9eb3" stroke-width="1.0"/>
<line x1="408.0" y1="428.7" x2="1010.0" y2="653.2" stroke="#9d9eb3" stroke-width="0.9" />
<line x1="414.0" y1="415.5" x2="1010.0" y2="637.8" stroke="#9d9eb3" stroke-width="0.8" opacity="0.8"/>
<path d="M946.2 245.5 q2 2.2 4 0" fill="none" stroke="#a0a0b2" stroke-width="0.9"/>
<ellipse cx="647.0" cy="296.5" rx="1.7" ry="1.1" fill="none" stroke="#a0a0b2" stroke-width="0.9"/>
<ellipse cx="649.8" cy="285.5" rx="1.7" ry="1.1" fill="none" stroke="#a0a0b2" stroke-width="0.9"/>
<ellipse cx="1045.1" cy="247.3" rx="1.7" ry="1.1" fill="none" stroke="#a0a0b2" stroke-width="0.9"/>
<ellipse cx="739.2" cy="454.3" rx="1.7" ry="1.1" fill="none" stroke="#a0a0b2" stroke-width="0.9"/>
<rect x="698.8" y="354.2" width="1.6" height="1.6" fill="#a0a0b2"/>
<rect x="999.2" y="368.3" width="1.6" height="1.6" fill="#a0a0b2"/>
<ellipse cx="930.6" cy="236.2" rx="1.7" ry="1.1" fill="none" stroke="#a0a0b2" stroke-width="0.9"/>
<ellipse cx="675.0" cy="425.8" rx="1.7" ry="1.1" fill="none" stroke="#a0a0b2" stroke-width="0.9"/>
<ellipse cx="906.5" cy="437.0" rx="1.7" ry="1.1" fill="none" stroke="#a0a0b2" stroke-width="0.9"/>
<ellipse cx="1115.2" cy="270.5" rx="1.7" ry="1.1" fill="none" stroke="#a0a0b2" stroke-width="0.9"/>
<ellipse cx="668.4" cy="365.8" rx="1.7" ry="1.1" fill="none" stroke="#a0a0b2" stroke-width="0.9"/>
<ellipse cx="769.9" cy="363.4" rx="1.7" ry="1.1" fill="none" stroke="#a0a0b2" stroke-width="0.9"/>
<path d="M676.5 417.9 q2 2.2 4 0" fill="none" stroke="#a0a0b2" stroke-width="0.9"/>
<ellipse cx="733.0" cy="344.9" rx="1.7" ry="1.1" fill="none" stroke="#a0a0b2" stroke-width="0.9"/>
<ellipse cx="1043.7" cy="526.6" rx="1.7" ry="1.1" fill="none" stroke="#a0a0b2" stroke-width="0.9"/>
<ellipse cx="1348.4" cy="380.9" rx="1.7" ry="1.1" fill="none" stroke="#a0a0b2" stroke-width="0.9"/>
<ellipse cx="1203.4" cy="341.2" rx="1.7" ry="1.1" fill="none" stroke="#a0a0b2" stroke-width="0.9"/>
<path d="M572.9 325.7 q2 2.2 4 0" fill="none" stroke="#a0a0b2" stroke-width="0.9"/>
<ellipse cx="807.5" cy="500.4" rx="1.7" ry="1.1" fill="none" stroke="#a0a0b2" stroke-width="0.9"/>
<path d="M989.3 449.7 q2 2.2 4 0" fill="none" stroke="#a0a0b2" stroke-width="0.9"/>
<rect x="751.9" y="464.1" width="1.6" height="1.6" fill="#a0a0b2"/>
<ellipse cx="833.0" cy="420.3" rx="1.7" ry="1.1" fill="none" stroke="#a0a0b2" stroke-width="0.9"/>
<rect x="973.2" y="464.9" width="1.6" height="1.6" fill="#a0a0b2"/>
<ellipse cx="1189.0" cy="392.1" rx="1.7" ry="1.1" fill="none" stroke="#a0a0b2" stroke-width="0.9"/>
<ellipse cx="1202.5" cy="286.0" rx="1.7" ry="1.1" fill="none" stroke="#a0a0b2" stroke-width="0.9"/>
<ellipse cx="869.7" cy="201.9" rx="1.7" ry="1.1" fill="none" stroke="#a0a0b2" stroke-width="0.9"/>
<ellipse cx="1218.9" cy="337.4" rx="1.7" ry="1.1" fill="none" stroke="#a0a0b2" stroke-width="0.9"/>
<ellipse cx="701.7" cy="459.3" rx="1.7" ry="1.1" fill="none" stroke="#a0a0b2" stroke-width="0.9"/>
<rect x="863.1" y="382.4" width="1.6" height="1.6" fill="#a0a0b2"/>
<ellipse cx="957.4" cy="551.5" rx="1.7" ry="1.1" fill="none" stroke="#a0a0b2" stroke-width="0.9"/>
<rect x="918.8" y="322.3" width="1.6" height="1.6" fill="#a0a0b2"/>
<ellipse cx="1322.1" cy="385.1" rx="1.7" ry="1.1" fill="none" stroke="#a0a0b2" stroke-width="0.9"/>
<ellipse cx="861.2" cy="248.1" rx="1.7" ry="1.1" fill="none" stroke="#a0a0b2" stroke-width="0.9"/>
<ellipse cx="1060.3" cy="334.8" rx="1.7" ry="1.1" fill="none" stroke="#a0a0b2" stroke-width="0.9"/>
<path d="M915.6 326.8 q2 2.2 4 0" fill="none" stroke="#a0a0b2" stroke-width="0.9"/>
<ellipse cx="1105.2" cy="533.0" rx="1.7" ry="1.1" fill="none" stroke="#a0a0b2" stroke-width="0.9"/>
<ellipse cx="912.9" cy="455.2" rx="1.7" ry="1.1" fill="none" stroke="#a0a0b2" stroke-width="0.9"/>
<rect x="1037.3" y="545.1" width="1.6" height="1.6" fill="#a0a0b2"/>
<ellipse cx="1132.0" cy="416.5" rx="1.7" ry="1.1" fill="none" stroke="#a0a0b2" stroke-width="0.9"/>
<ellipse cx="626.3" cy="330.5" rx="1.7" ry="1.1" fill="none" stroke="#a0a0b2" stroke-width="0.9"/>
<ellipse cx="773.9" cy="205.1" rx="1.7" ry="1.1" fill="none" stroke="#a0a0b2" stroke-width="0.9"/>
<ellipse cx="996.8" cy="222.0" rx="1.7" ry="1.1" fill="none" stroke="#a0a0b2" stroke-width="0.9"/>
<ellipse cx="866.0" cy="193.9" rx="1.7" ry="1.1" fill="none" stroke="#a0a0b2" stroke-width="0.9"/>
<ellipse cx="1120.3" cy="308.8" rx="1.7" ry="1.1" fill="none" stroke="#a0a0b2" stroke-width="0.9"/>
<ellipse cx="877.4" cy="309.6" rx="1.7" ry="1.1" fill="none" stroke="#a0a0b2" stroke-width="0.9"/>
<ellipse cx="923.6" cy="593.6" rx="1.7" ry="1.1" fill="none" stroke="#a0a0b2" stroke-width="0.9"/>
<ellipse cx="1068.4" cy="262.8" rx="1.7" ry="1.1" fill="none" stroke="#a0a0b2" stroke-width="0.9"/>
<rect x="913.2" y="280.3" width="1.6" height="1.6" fill="#a0a0b2"/>
<rect x="902.3" y="173.7" width="1.6" height="1.6" fill="#a0a0b2"/>
<ellipse cx="1070.5" cy="289.3" rx="1.7" ry="1.1" fill="none" stroke="#a0a0b2" stroke-width="0.9"/>
<rect x="622.5" y="283.6" width="1.6" height="1.6" fill="#a0a0b2"/>
<ellipse cx="1050.0" cy="514.8" rx="1.7" ry="1.1" fill="none" stroke="#a0a0b2" stroke-width="0.9"/>
<path d="M965.0 259.4 q2 2.2 4 0" fill="none" stroke="#a0a0b2" stroke-width="0.9"/>
<ellipse cx="821.9" cy="464.9" rx="1.7" ry="1.1" fill="none" stroke="#a0a0b2" stroke-width="0.9"/>
<rect x="625.6" y="405.0" width="1.6" height="1.6" fill="#a0a0b2"/>
<rect x="999.2" y="542.0" width="1.6" height="1.6" fill="#a0a0b2"/>
<ellipse cx="1163.5" cy="358.0" rx="1.7" ry="1.1" fill="none" stroke="#a0a0b2" stroke-width="0.9"/>
<ellipse cx="1015.3" cy="218.9" rx="1.7" ry="1.1" fill="none" stroke="#a0a0b2" stroke-width="0.9"/>
<path d="M877.0 265.7 q2 2.2 4 0" fill="none" stroke="#a0a0b2" stroke-width="0.9"/>
<rect x="1203.0" y="465.8" width="1.6" height="1.6" fill="#a0a0b2"/>
<ellipse cx="1020.8" cy="613.7" rx="1.7" ry="1.1" fill="none" stroke="#a0a0b2" stroke-width="0.9"/>
<ellipse cx="857.0" cy="243.8" rx="1.7" ry="1.1" fill="none" stroke="#a0a0b2" stroke-width="0.9"/>
<rect x="689.0" y="349.1" width="1.6" height="1.6" fill="#a0a0b2"/>
<path d="M1120.5 450.0 q2 2.2 4 0" fill="none" stroke="#a0a0b2" stroke-width="0.9"/>
<path d="M1253.1 332.0 q2 2.2 4 0" fill="none" stroke="#a0a0b2" stroke-width="0.9"/>
<path d="M1041.2 548.8 q2 2.2 4 0" fill="none" stroke="#a0a0b2" stroke-width="0.9"/>
<path d="M1026.2 287.1 q2 2.2 4 0" fill="none" stroke="#a0a0b2" stroke-width="0.9"/>
<rect x="694.5" y="426.1" width="1.6" height="1.6" fill="#a0a0b2"/>
<rect x="890.4" y="329.8" width="1.6" height="1.6" fill="#a0a0b2"/>
<ellipse cx="1177.1" cy="339.1" rx="1.7" ry="1.1" fill="none" stroke="#a0a0b2" stroke-width="0.9"/>
<rect x="546.2" y="414.9" width="1.6" height="1.6" fill="#a0a0b2"/>
<rect x="574.3" y="392.2" width="1.6" height="1.6" fill="#a0a0b2"/>
<ellipse cx="1065.7" cy="374.0" rx="1.7" ry="1.1" fill="none" stroke="#a0a0b2" stroke-width="0.9"/>
<rect x="887.8" y="164.6" width="1.6" height="1.6" fill="#a0a0b2"/>
<rect x="990.5" y="420.2" width="1.6" height="1.6" fill="#a0a0b2"/>
<rect x="726.1" y="468.0" width="1.6" height="1.6" fill="#a0a0b2"/>
<ellipse cx="841.5" cy="248.6" rx="1.7" ry="1.1" fill="none" stroke="#a0a0b2" stroke-width="0.9"/>
<ellipse cx="726.1" cy="347.5" rx="1.7" ry="1.1" fill="none" stroke="#a0a0b2" stroke-width="0.9"/>
<rect x="1011.4" y="260.2" width="1.6" height="1.6" fill="#a0a0b2"/>
<path d="M841.8 337.0 q2 2.2 4 0" fill="none" stroke="#a0a0b2" stroke-width="0.9"/>
<rect x="1182.7" y="447.0" width="1.6" height="1.6" fill="#a0a0b2"/>
<ellipse cx="901.8" cy="389.9" rx="1.7" ry="1.1" fill="none" stroke="#a0a0b2" stroke-width="0.9"/>
<ellipse cx="653.3" cy="258.3" rx="1.7" ry="1.1" fill="none" stroke="#a0a0b2" stroke-width="0.9"/>
<path d="M728.7 301.3 q2 2.2 4 0" fill="none" stroke="#a0a0b2" stroke-width="0.9"/>
<ellipse cx="1015.9" cy="345.1" rx="1.7" ry="1.1" fill="none" stroke="#a0a0b2" stroke-width="0.9"/>
<ellipse cx="833.4" cy="471.4" rx="1.7" ry="1.1" fill="none" stroke="#a0a0b2" stroke-width="0.9"/>
<ellipse cx="1048.9" cy="324.5" rx="1.7" ry="1.1" fill="none" stroke="#a0a0b2" stroke-width="0.9"/>
<path d="M1069.1 442.7 q2 2.2 4 0" fill="none" stroke="#a0a0b2" stroke-width="0.9"/>
<ellipse cx="903.1" cy="551.8" rx="1.7" ry="1.1" fill="none" stroke="#a0a0b2" stroke-width="0.9"/>
<ellipse cx="977.7" cy="407.0" rx="1.7" ry="1.1" fill="none" stroke="#a0a0b2" stroke-width="0.9"/>
<ellipse cx="1046.1" cy="410.0" rx="1.7" ry="1.1" fill="none" stroke="#a0a0b2" stroke-width="0.9"/>
<path d="M723.3 497.8 q2 2.2 4 0" fill="none" stroke="#a0a0b2" stroke-width="0.9"/>
<ellipse cx="960.1" cy="585.7" rx="1.7" ry="1.1" fill="none" stroke="#a0a0b2" stroke-width="0.9"/>
<rect x="771.8" y="515.4" width="1.6" height="1.6" fill="#a0a0b2"/>
<ellipse cx="849.6" cy="196.4" rx="1.7" ry="1.1" fill="none" stroke="#a0a0b2" stroke-width="0.9"/>
<ellipse cx="764.3" cy="215.0" rx="1.7" ry="1.1" fill="none" stroke="#a0a0b2" stroke-width="0.9"/>
<rect x="900.0" y="495.6" width="1.6" height="1.6" fill="#a0a0b2"/>
<path d="M621.8 364.3 q2 2.2 4 0" fill="none" stroke="#a0a0b2" stroke-width="0.9"/>
<rect x="550.1" y="407.0" width="1.6" height="1.6" fill="#a0a0b2"/>
<ellipse cx="568.4" cy="443.9" rx="1.7" ry="1.1" fill="none" stroke="#a0a0b2" stroke-width="0.9"/>
<rect x="710.7" y="512.4" width="1.6" height="1.6" fill="#a0a0b2"/>
<ellipse cx="741.0" cy="287.3" rx="1.7" ry="1.1" fill="none" stroke="#a0a0b2" stroke-width="0.9"/>
<ellipse cx="939.4" cy="261.3" rx="1.7" ry="1.1" fill="none" stroke="#a0a0b2" stroke-width="0.9"/>
<path d="M1233.3 296.9 q2 2.2 4 0" fill="none" stroke="#a0a0b2" stroke-width="0.9"/>
<ellipse cx="1069.7" cy="234.5" rx="1.7" ry="1.1" fill="none" stroke="#a0a0b2" stroke-width="0.9"/>
<ellipse cx="981.7" cy="411.4" rx="1.7" ry="1.1" fill="none" stroke="#a0a0b2" stroke-width="0.9"/>
<rect x="1084.4" y="566.3" width="1.6" height="1.6" fill="#a0a0b2"/>
<ellipse cx="773.4" cy="229.0" rx="1.7" ry="1.1" fill="none" stroke="#a0a0b2" stroke-width="0.9"/>
<ellipse cx="1169.2" cy="378.7" rx="1.7" ry="1.1" fill="none" stroke="#a0a0b2" stroke-width="0.9"/>
<rect x="703.5" y="476.4" width="1.6" height="1.6" fill="#a0a0b2"/>
<rect x="909.5" y="230.0" width="1.6" height="1.6" fill="#a0a0b2"/>
<ellipse cx="875.6" cy="451.6" rx="1.7" ry="1.1" fill="none" stroke="#a0a0b2" stroke-width="0.9"/>
<ellipse cx="577.7" cy="335.3" rx="1.7" ry="1.1" fill="none" stroke="#a0a0b2" stroke-width="0.9"/>
<ellipse cx="873.1" cy="493.6" rx="1.7" ry="1.1" fill="none" stroke="#a0a0b2" stroke-width="0.9"/>
<rect x="1294.9" y="338.6" width="1.6" height="1.6" fill="#a0a0b2"/>
<path d="M948.1 326.1 q2 2.2 4 0" fill="none" stroke="#a0a0b2" stroke-width="0.9"/>
<ellipse cx="1257.4" cy="410.5" rx="1.7" ry="1.1" fill="none" stroke="#a0a0b2" stroke-width="0.9"/>
<ellipse cx="1033.2" cy="314.4" rx="1.7" ry="1.1" fill="none" stroke="#a0a0b2" stroke-width="0.9"/>
<ellipse cx="892.3" cy="182.1" rx="1.7" ry="1.1" fill="none" stroke="#a0a0b2" stroke-width="0.9"/>
<path d="M916.6 226.9 q2 2.2 4 0" fill="none" stroke="#a0a0b2" stroke-width="0.9"/>
<ellipse cx="894.0" cy="241.5" rx="1.5" ry="1.0" fill="none" stroke="#a0a0b2" stroke-width="0.9"/>
<ellipse cx="955.1" cy="205.6" rx="1.5" ry="1.0" fill="none" stroke="#a0a0b2" stroke-width="0.9"/>
<path d="M836.1 249.0 q2 2.2 4 0" fill="none" stroke="#a0a0b2" stroke-width="0.9"/>
<rect x="885.3" y="234.7" width="1.6" height="1.6" fill="#a0a0b2"/>
<ellipse cx="838.0" cy="259.4" rx="1.5" ry="1.0" fill="none" stroke="#a0a0b2" stroke-width="0.9"/>
<ellipse cx="877.8" cy="276.2" rx="1.5" ry="1.0" fill="none" stroke="#a0a0b2" stroke-width="0.9"/>
<rect x="895.0" y="264.2" width="1.6" height="1.6" fill="#a0a0b2"/>
<path d="M859.8 269.9 q2 2.2 4 0" fill="none" stroke="#a0a0b2" stroke-width="0.9"/>
<ellipse cx="941.9" cy="247.7" rx="1.5" ry="1.0" fill="none" stroke="#a0a0b2" stroke-width="0.9"/>
<ellipse cx="911.0" cy="202.7" rx="1.5" ry="1.0" fill="none" stroke="#a0a0b2" stroke-width="0.9"/>
<ellipse cx="970.1" cy="240.1" rx="1.5" ry="1.0" fill="none" stroke="#a0a0b2" stroke-width="0.9"/>
<rect x="832.3" y="259.5" width="1.6" height="1.6" fill="#a0a0b2"/>
<ellipse cx="959.6" cy="239.4" rx="1.5" ry="1.0" fill="none" stroke="#a0a0b2" stroke-width="0.9"/>
<ellipse cx="899.0" cy="238.4" rx="1.5" ry="1.0" fill="none" stroke="#a0a0b2" stroke-width="0.9"/>
<rect x="936.9" y="228.1" width="1.6" height="1.6" fill="#a0a0b2"/>
<ellipse cx="1303.5" cy="400.1" rx="1.5" ry="1.0" fill="none" stroke="#a0a0b2" stroke-width="0.9"/>
<ellipse cx="1330.8" cy="380.4" rx="1.5" ry="1.0" fill="none" stroke="#a0a0b2" stroke-width="0.9"/>
<ellipse cx="1218.1" cy="347.4" rx="1.5" ry="1.0" fill="none" stroke="#a0a0b2" stroke-width="0.9"/>
<ellipse cx="1293.6" cy="352.8" rx="1.5" ry="1.0" fill="none" stroke="#a0a0b2" stroke-width="0.9"/>
<ellipse cx="1232.4" cy="337.9" rx="1.5" ry="1.0" fill="none" stroke="#a0a0b2" stroke-width="0.9"/>
<ellipse cx="1301.2" cy="335.6" rx="1.5" ry="1.0" fill="none" stroke="#a0a0b2" stroke-width="0.9"/>
<path d="M1266.4 347.4 q2 2.2 4 0" fill="none" stroke="#a0a0b2" stroke-width="0.9"/>
<path d="M1229.6 399.0 q2 2.2 4 0" fill="none" stroke="#a0a0b2" stroke-width="0.9"/>
<ellipse cx="1236.6" cy="417.1" rx="1.5" ry="1.0" fill="none" stroke="#a0a0b2" stroke-width="0.9"/>
<ellipse cx="1182.0" cy="410.0" rx="1.5" ry="1.0" fill="none" stroke="#a0a0b2" stroke-width="0.9"/>
<ellipse cx="1265.3" cy="398.0" rx="1.5" ry="1.0" fill="none" stroke="#a0a0b2" stroke-width="0.9"/>
<path d="M1246.0 422.9 q2 2.2 4 0" fill="none" stroke="#a0a0b2" stroke-width="0.9"/>
<ellipse cx="1246.4" cy="412.3" rx="1.5" ry="1.0" fill="none" stroke="#a0a0b2" stroke-width="0.9"/>
<rect x="1259.3" y="377.8" width="1.6" height="1.6" fill="#a0a0b2"/>
<path d="M1250.4 416.3 q2 2.2 4 0" fill="none" stroke="#a0a0b2" stroke-width="0.9"/>
<path d="M1276.8 408.1 q2 2.2 4 0" fill="none" stroke="#a0a0b2" stroke-width="0.9"/>
<ellipse cx="1003.8" cy="329.5" rx="1.5" ry="1.0" fill="none" stroke="#a0a0b2" stroke-width="0.9"/>
<rect x="1016.1" y="341.4" width="1.6" height="1.6" fill="#a0a0b2"/>
<path d="M994.0 389.7 q2 2.2 4 0" fill="none" stroke="#a0a0b2" stroke-width="0.9"/>
<ellipse cx="1028.7" cy="387.3" rx="1.5" ry="1.0" fill="none" stroke="#a0a0b2" stroke-width="0.9"/>
<ellipse cx="1021.4" cy="411.9" rx="1.5" ry="1.0" fill="none" stroke="#a0a0b2" stroke-width="0.9"/>
<ellipse cx="989.2" cy="390.5" rx="1.5" ry="1.0" fill="none" stroke="#a0a0b2" stroke-width="0.9"/>
<ellipse cx="1061.0" cy="374.2" rx="1.5" ry="1.0" fill="none" stroke="#a0a0b2" stroke-width="0.9"/>
<ellipse cx="940.2" cy="379.7" rx="1.5" ry="1.0" fill="none" stroke="#a0a0b2" stroke-width="0.9"/>
<ellipse cx="989.8" cy="424.2" rx="1.5" ry="1.0" fill="none" stroke="#a0a0b2" stroke-width="0.9"/>
<path d="M981.3 369.2 q2 2.2 4 0" fill="none" stroke="#a0a0b2" stroke-width="0.9"/>
<path d="M1027.6 401.1 q2 2.2 4 0" fill="none" stroke="#a0a0b2" stroke-width="0.9"/>
<ellipse cx="968.5" cy="328.7" rx="1.5" ry="1.0" fill="none" stroke="#a0a0b2" stroke-width="0.9"/>
<path d="M1054.8 378.2 q2 2.2 4 0" fill="none" stroke="#a0a0b2" stroke-width="0.9"/>
<ellipse cx="966.9" cy="318.9" rx="1.5" ry="1.0" fill="none" stroke="#a0a0b2" stroke-width="0.9"/>
<path d="M1005.3 400.8 q2 2.2 4 0" fill="none" stroke="#a0a0b2" stroke-width="0.9"/>
<ellipse cx="965.2" cy="366.5" rx="1.5" ry="1.0" fill="none" stroke="#a0a0b2" stroke-width="0.9"/>
<rect x="1031.2" y="348.5" width="1.6" height="1.6" fill="#a0a0b2"/>
<rect x="904.4" y="392.1" width="1.6" height="1.6" fill="#a0a0b2"/>
<rect x="927.5" y="345.8" width="1.6" height="1.6" fill="#a0a0b2"/>
<ellipse cx="1077.5" cy="401.3" rx="1.5" ry="1.0" fill="none" stroke="#a0a0b2" stroke-width="0.9"/>
<ellipse cx="910.1" cy="391.3" rx="1.5" ry="1.0" fill="none" stroke="#a0a0b2" stroke-width="0.9"/>
<ellipse cx="1047.7" cy="357.6" rx="1.5" ry="1.0" fill="none" stroke="#a0a0b2" stroke-width="0.9"/>
<rect x="1105.7" y="377.8" width="1.6" height="1.6" fill="#a0a0b2"/>
<path d="M960.6 404.7 q2 2.2 4 0" fill="none" stroke="#a0a0b2" stroke-width="0.9"/>
<ellipse cx="918.2" cy="389.3" rx="1.5" ry="1.0" fill="none" stroke="#a0a0b2" stroke-width="0.9"/>
<ellipse cx="974.5" cy="315.7" rx="1.5" ry="1.0" fill="none" stroke="#a0a0b2" stroke-width="0.9"/>
<ellipse cx="1011.4" cy="361.0" rx="1.5" ry="1.0" fill="none" stroke="#a0a0b2" stroke-width="0.9"/>
<rect x="992.6" y="355.0" width="1.6" height="1.6" fill="#a0a0b2"/>
<rect x="896.1" y="365.0" width="1.6" height="1.6" fill="#a0a0b2"/>
<path d="M896.0 384.8 q2 2.2 4 0" fill="none" stroke="#a0a0b2" stroke-width="0.9"/>
<ellipse cx="1083.0" cy="386.4" rx="1.5" ry="1.0" fill="none" stroke="#a0a0b2" stroke-width="0.9"/>
<path d="M931.4 405.6 q2 2.2 4 0" fill="none" stroke="#a0a0b2" stroke-width="0.9"/>
<ellipse cx="984.9" cy="364.5" rx="1.5" ry="1.0" fill="none" stroke="#a0a0b2" stroke-width="0.9"/>
<rect x="967.7" y="323.0" width="1.6" height="1.6" fill="#a0a0b2"/>
<ellipse cx="922.9" cy="395.0" rx="1.5" ry="1.0" fill="none" stroke="#a0a0b2" stroke-width="0.9"/>
<ellipse cx="961.9" cy="364.6" rx="1.5" ry="1.0" fill="none" stroke="#a0a0b2" stroke-width="0.9"/>
<rect x="933.8" y="400.8" width="1.6" height="1.6" fill="#a0a0b2"/>
<rect x="1034.4" y="403.9" width="1.6" height="1.6" fill="#a0a0b2"/>
<path d="M1061.4 406.6 q2 2.2 4 0" fill="none" stroke="#a0a0b2" stroke-width="0.9"/>
<ellipse cx="906.2" cy="367.3" rx="1.5" ry="1.0" fill="none" stroke="#a0a0b2" stroke-width="0.9"/>
<ellipse cx="1024.6" cy="402.2" rx="1.5" ry="1.0" fill="none" stroke="#a0a0b2" stroke-width="0.9"/>
<ellipse cx="886.9" cy="380.7" rx="1.5" ry="1.0" fill="none" stroke="#a0a0b2" stroke-width="0.9"/>
<ellipse cx="1010.6" cy="365.1" rx="1.5" ry="1.0" fill="none" stroke="#a0a0b2" stroke-width="0.9"/>
<ellipse cx="989.6" cy="424.2" rx="1.5" ry="1.0" fill="none" stroke="#a0a0b2" stroke-width="0.9"/>
<path d="M1041.6 372.9 q2 2.2 4 0" fill="none" stroke="#a0a0b2" stroke-width="0.9"/>
<ellipse cx="1016.0" cy="348.5" rx="1.5" ry="1.0" fill="none" stroke="#a0a0b2" stroke-width="0.9"/>
<ellipse cx="913.7" cy="388.5" rx="1.5" ry="1.0" fill="none" stroke="#a0a0b2" stroke-width="0.9"/>
<rect x="914.8" y="388.4" width="1.6" height="1.6" fill="#a0a0b2"/>
<ellipse cx="1027.4" cy="349.8" rx="1.5" ry="1.0" fill="none" stroke="#a0a0b2" stroke-width="0.9"/>
<ellipse cx="951.3" cy="342.8" rx="1.5" ry="1.0" fill="none" stroke="#a0a0b2" stroke-width="0.9"/>
<path d="M980.7 345.7 q2 2.2 4 0" fill="none" stroke="#a0a0b2" stroke-width="0.9"/>
<ellipse cx="1035.2" cy="417.2" rx="1.5" ry="1.0" fill="none" stroke="#a0a0b2" stroke-width="0.9"/>
<ellipse cx="983.7" cy="374.2" rx="1.5" ry="1.0" fill="none" stroke="#a0a0b2" stroke-width="0.9"/>
<ellipse cx="1017.6" cy="338.0" rx="1.5" ry="1.0" fill="none" stroke="#a0a0b2" stroke-width="0.9"/>
<ellipse cx="1109.5" cy="379.0" rx="1.5" ry="1.0" fill="none" stroke="#a0a0b2" stroke-width="0.9"/>
<ellipse cx="985.2" cy="587.0" rx="1.5" ry="1.0" fill="none" stroke="#a0a0b2" stroke-width="0.9"/>
<ellipse cx="1050.7" cy="480.2" rx="1.5" ry="1.0" fill="none" stroke="#a0a0b2" stroke-width="0.9"/>
<rect x="936.7" y="587.9" width="1.6" height="1.6" fill="#a0a0b2"/>
<ellipse cx="1192.3" cy="484.5" rx="1.5" ry="1.0" fill="none" stroke="#a0a0b2" stroke-width="0.9"/>
<ellipse cx="991.4" cy="596.4" rx="1.5" ry="1.0" fill="none" stroke="#a0a0b2" stroke-width="0.9"/>
<ellipse cx="1150.9" cy="464.5" rx="1.5" ry="1.0" fill="none" stroke="#a0a0b2" stroke-width="0.9"/>
<rect x="1039.4" y="598.8" width="1.6" height="1.6" fill="#a0a0b2"/>
<ellipse cx="1162.9" cy="522.0" rx="1.5" ry="1.0" fill="none" stroke="#a0a0b2" stroke-width="0.9"/>
<path d="M975.2 511.3 q2 2.2 4 0" fill="none" stroke="#a0a0b2" stroke-width="0.9"/>
<path d="M1061.3 586.0 q2 2.2 4 0" fill="none" stroke="#a0a0b2" stroke-width="0.9"/>
<path d="M1085.9 538.7 q2 2.2 4 0" fill="none" stroke="#a0a0b2" stroke-width="0.9"/>
<ellipse cx="906.9" cy="540.6" rx="1.5" ry="1.0" fill="none" stroke="#a0a0b2" stroke-width="0.9"/>
<ellipse cx="1075.1" cy="574.1" rx="1.5" ry="1.0" fill="none" stroke="#a0a0b2" stroke-width="0.9"/>
<path d="M1025.1 472.1 q2 2.2 4 0" fill="none" stroke="#a0a0b2" stroke-width="0.9"/>
<ellipse cx="1146.3" cy="486.7" rx="1.5" ry="1.0" fill="none" stroke="#a0a0b2" stroke-width="0.9"/>
<ellipse cx="1024.3" cy="541.8" rx="1.5" ry="1.0" fill="none" stroke="#a0a0b2" stroke-width="0.9"/>
<ellipse cx="972.6" cy="526.4" rx="1.5" ry="1.0" fill="none" stroke="#a0a0b2" stroke-width="0.9"/>
<rect x="1012.3" y="510.7" width="1.6" height="1.6" fill="#a0a0b2"/>
<ellipse cx="983.4" cy="590.8" rx="1.5" ry="1.0" fill="none" stroke="#a0a0b2" stroke-width="0.9"/>
<rect x="1044.4" y="477.0" width="1.6" height="1.6" fill="#a0a0b2"/>
<ellipse cx="1108.3" cy="514.2" rx="1.5" ry="1.0" fill="none" stroke="#a0a0b2" stroke-width="0.9"/>
<ellipse cx="1001.8" cy="553.0" rx="1.5" ry="1.0" fill="none" stroke="#a0a0b2" stroke-width="0.9"/>
<rect x="725.7" y="344.6" width="1.6" height="1.6" fill="#a0a0b2"/>
<ellipse cx="803.4" cy="286.1" rx="1.5" ry="1.0" fill="none" stroke="#a0a0b2" stroke-width="0.9"/>
<ellipse cx="754.0" cy="357.8" rx="1.5" ry="1.0" fill="none" stroke="#a0a0b2" stroke-width="0.9"/>
<ellipse cx="814.4" cy="388.2" rx="1.5" ry="1.0" fill="none" stroke="#a0a0b2" stroke-width="0.9"/>
<ellipse cx="677.9" cy="369.3" rx="1.5" ry="1.0" fill="none" stroke="#a0a0b2" stroke-width="0.9"/>
<ellipse cx="884.6" cy="343.7" rx="1.5" ry="1.0" fill="none" stroke="#a0a0b2" stroke-width="0.9"/>
<rect x="864.7" y="344.7" width="1.6" height="1.6" fill="#a0a0b2"/>
<ellipse cx="831.9" cy="318.0" rx="1.5" ry="1.0" fill="none" stroke="#a0a0b2" stroke-width="0.9"/>
<rect x="754.8" y="355.2" width="1.6" height="1.6" fill="#a0a0b2"/>
<ellipse cx="742.2" cy="313.2" rx="1.5" ry="1.0" fill="none" stroke="#a0a0b2" stroke-width="0.9"/>
<ellipse cx="923.9" cy="346.1" rx="1.5" ry="1.0" fill="none" stroke="#a0a0b2" stroke-width="0.9"/>
<rect x="725.9" y="306.6" width="1.6" height="1.6" fill="#a0a0b2"/>
<rect x="830.0" y="392.6" width="1.6" height="1.6" fill="#a0a0b2"/>
<ellipse cx="891.9" cy="360.1" rx="1.5" ry="1.0" fill="none" stroke="#a0a0b2" stroke-width="0.9"/>
<ellipse cx="1044.9" cy="634.9" rx="1.4" ry="0.9" fill="none" stroke="#a0a0b2" stroke-width="0.9"/>
<rect x="1149.7" y="560.7" width="1.6" height="1.6" fill="#a0a0b2"/>
<ellipse cx="1025.8" cy="648.2" rx="1.4" ry="0.9" fill="none" stroke="#a0a0b2" stroke-width="0.9"/>
<ellipse cx="1407.9" cy="382.5" rx="1.4" ry="0.9" fill="none" stroke="#a0a0b2" stroke-width="0.9"/>
<path d="M1243.5 479.4 q2 2.2 4 0" fill="none" stroke="#a0a0b2" stroke-width="0.9"/>
<ellipse cx="1113.8" cy="587.0" rx="1.4" ry="0.9" fill="none" stroke="#a0a0b2" stroke-width="0.9"/>
<ellipse cx="1089.4" cy="604.0" rx="1.4" ry="0.9" fill="none" stroke="#a0a0b2" stroke-width="0.9"/>
<ellipse cx="1134.7" cy="556.5" rx="1.4" ry="0.9" fill="none" stroke="#a0a0b2" stroke-width="0.9"/>
<ellipse cx="1051.3" cy="614.5" rx="1.4" ry="0.9" fill="none" stroke="#a0a0b2" stroke-width="0.9"/>
<ellipse cx="1122.2" cy="581.2" rx="1.4" ry="0.9" fill="none" stroke="#a0a0b2" stroke-width="0.9"/>
<ellipse cx="1249.2" cy="492.8" rx="1.4" ry="0.9" fill="none" stroke="#a0a0b2" stroke-width="0.9"/>
<rect x="1394.6" y="374.3" width="1.6" height="1.6" fill="#a0a0b2"/>
<path d="M1382.9 382.5 q2 2.2 4 0" fill="none" stroke="#a0a0b2" stroke-width="0.9"/>
<ellipse cx="1059.5" cy="624.8" rx="1.4" ry="0.9" fill="none" stroke="#a0a0b2" stroke-width="0.9"/>
<ellipse cx="1278.7" cy="456.3" rx="1.4" ry="0.9" fill="none" stroke="#a0a0b2" stroke-width="0.9"/>
<rect x="1129.4" y="574.8" width="1.6" height="1.6" fill="#a0a0b2"/>
<ellipse cx="1293.3" cy="446.2" rx="1.4" ry="0.9" fill="none" stroke="#a0a0b2" stroke-width="0.9"/>
<path d="M1316.0 445.0 q2 2.2 4 0" fill="none" stroke="#a0a0b2" stroke-width="0.9"/>
<path d="M1225.8 507.7 q2 2.2 4 0" fill="none" stroke="#a0a0b2" stroke-width="0.9"/>
<ellipse cx="1053.6" cy="628.9" rx="1.4" ry="0.9" fill="none" stroke="#a0a0b2" stroke-width="0.9"/>
<rect x="1215.0" y="499.2" width="1.6" height="1.6" fill="#a0a0b2"/>
<path d="M1119.7 565.5 q2 2.2 4 0" fill="none" stroke="#a0a0b2" stroke-width="0.9"/>
<ellipse cx="1281.5" cy="470.4" rx="1.4" ry="0.9" fill="none" stroke="#a0a0b2" stroke-width="0.9"/>
<ellipse cx="1104.1" cy="577.8" rx="1.4" ry="0.9" fill="none" stroke="#a0a0b2" stroke-width="0.9"/>
<ellipse cx="1256.6" cy="471.7" rx="1.4" ry="0.9" fill="none" stroke="#a0a0b2" stroke-width="0.9"/>
<ellipse cx="1383.8" cy="383.2" rx="1.4" ry="0.9" fill="none" stroke="#a0a0b2" stroke-width="0.9"/>
<polygon points="560.7,492.3 576.9,483.5 587.9,472.1 584.1,465.1 568.5,468.1 552.3,476.9" fill="#ffff00" stroke="#ffff00" stroke-width="1.5" stroke-linejoin="round"/>
<rect x="570.3" y="470.4" width="1.6" height="1.3" fill="#8a8a46" opacity="0.85"/>
<rect x="583.0" y="474.0" width="1.6" height="1.3" fill="#8a8a46" opacity="0.85"/>
<rect x="572.8" y="470.3" width="1.6" height="1.3" fill="#8a8a46" opacity="0.85"/>
<rect x="573.1" y="478.2" width="1.6" height="1.3" fill="#8a8a46" opacity="0.85"/>
<rect x="560.9" y="474.8" width="1.6" height="1.3" fill="#8a8a46" opacity="0.85"/>
<rect x="575.6" y="475.8" width="2.2" height="1.3" fill="#8a8a46" opacity="0.85"/>
<rect x="574.5" y="478.4" width="1.2" height="1.3" fill="#8a8a46" opacity="0.85"/>
<rect x="577.4" y="469.7" width="1.6" height="1.3" fill="#8a8a46" opacity="0.85"/>
<rect x="572.4" y="472.9" width="2.2" height="1.3" fill="#8a8a46" opacity="0.85"/>
<rect x="565.3" y="477.7" width="1.2" height="1.3" fill="#8a8a46" opacity="0.85"/>
<rect x="562.8" y="474.1" width="2.2" height="1.3" fill="#8a8a46" opacity="0.85"/>
<rect x="560.8" y="473.7" width="1.6" height="1.3" fill="#8a8a46" opacity="0.85"/>
<rect x="583.7" y="468.8" width="1.2" height="1.3" fill="#8a8a46" opacity="0.85"/>
<rect x="572.8" y="468.8" width="1.6" height="1.3" fill="#8a8a46" opacity="0.85"/>
<rect x="582.3" y="466.4" width="1.6" height="1.3" fill="#8a8a46" opacity="0.85"/>
<rect x="579.8" y="468.2" width="1.6" height="1.3" fill="#8a8a46" opacity="0.85"/>
<rect x="579.9" y="466.5" width="1.6" height="1.3" fill="#8a8a46" opacity="0.85"/>
<rect x="561.8" y="472.9" width="2.2" height="1.3" fill="#8a8a46" opacity="0.85"/>
<rect x="583.4" y="469.6" width="1.2" height="1.3" fill="#8a8a46" opacity="0.85"/>
<rect x="571.1" y="481.9" width="1.6" height="1.3" fill="#8a8a46" opacity="0.85"/>
<rect x="575.9" y="477.3" width="2.2" height="1.3" fill="#8a8a46" opacity="0.85"/>
<rect x="581.1" y="466.8" width="2.2" height="1.3" fill="#8a8a46" opacity="0.85"/>
<rect x="575.9" y="471.0" width="1.2" height="1.3" fill="#8a8a46" opacity="0.85"/>
<rect x="565.8" y="472.3" width="1.2" height="1.3" fill="#8a8a46" opacity="0.85"/>
<rect x="582.4" y="466.0" width="2.2" height="1.3" fill="#8a8a46" opacity="0.85"/>
<rect x="573.5" y="470.0" width="1.2" height="1.3" fill="#8a8a46" opacity="0.85"/>
<rect x="579.0" y="470.3" width="1.6" height="1.3" fill="#8a8a46" opacity="0.85"/>
<rect x="562.5" y="477.0" width="1.2" height="1.3" fill="#8a8a46" opacity="0.85"/>
<rect x="560.1" y="481.5" width="1.6" height="1.3" fill="#8a8a46" opacity="0.85"/>
<rect x="558.0" y="475.8" width="1.6" height="1.3" fill="#8a8a46" opacity="0.85"/>
<rect x="573.5" y="469.3" width="2.2" height="1.3" fill="#8a8a46" opacity="0.85"/>
<rect x="559.1" y="476.3" width="2.2" height="1.3" fill="#8a8a46" opacity="0.85"/>
<rect x="569.5" y="484.9" width="2.2" height="1.3" fill="#8a8a46" opacity="0.85"/>
<rect x="570.2" y="484.0" width="1.6" height="1.3" fill="#8a8a46" opacity="0.85"/>
<rect x="579.6" y="475.9" width="1.6" height="1.3" fill="#8a8a46" opacity="0.85"/>
<rect x="572.2" y="481.3" width="1.6" height="1.3" fill="#8a8a46" opacity="0.85"/>
<rect x="574.4" y="472.2" width="1.6" height="1.3" fill="#8a8a46" opacity="0.85"/>
<rect x="560.7" y="472.7" width="1.2" height="1.3" fill="#8a8a46" opacity="0.85"/>
<rect x="572.0" y="480.6" width="1.6" height="1.3" fill="#8a8a46" opacity="0.85"/>
<rect x="572.6" y="472.6" width="1.2" height="1.3" fill="#8a8a46" opacity="0.85"/>
<rect x="559.3" y="474.3" width="1.2" height="1.3" fill="#8a8a46" opacity="0.85"/>
<rect x="577.6" y="478.2" width="1.2" height="1.3" fill="#8a8a46" opacity="0.85"/>
<rect x="576.3" y="479.7" width="2.2" height="1.3" fill="#8a8a46" opacity="0.85"/>
<rect x="569.1" y="470.5" width="1.6" height="1.3" fill="#8a8a46" opacity="0.85"/>
<rect x="560.9" y="475.4" width="1.2" height="1.3" fill="#8a8a46" opacity="0.85"/>
<rect x="561.9" y="480.4" width="1.2" height="1.3" fill="#8a8a46" opacity="0.85"/>
<ellipse cx="556.5" cy="484.6" rx="7.4" ry="8.0" fill="#74748a" stroke="#ffff00" stroke-width="1.6" transform="rotate(-25 556.5 484.6)"/>
<line x1="552.6" y1="487.6" x2="557.2" y2="484.6" stroke="#ffee90" stroke-width="1.7" stroke-linecap="round"/>
<polygon points="918.3,626.7 934.9,617.6 945.9,605.5 942.1,598.5 925.9,601.1 909.3,610.1" fill="#ffff00" stroke="#ffff00" stroke-width="1.5" stroke-linejoin="round"/>
<rect x="926.9" y="616.5" width="1.2" height="1.3" fill="#8a8a46" opacity="0.85"/>
<rect x="941.1" y="602.3" width="1.2" height="1.3" fill="#8a8a46" opacity="0.85"/>
<rect x="932.9" y="609.2" width="1.2" height="1.3" fill="#8a8a46" opacity="0.85"/>
<rect x="939.9" y="604.3" width="1.2" height="1.3" fill="#8a8a46" opacity="0.85"/>
<rect x="935.2" y="611.4" width="2.2" height="1.3" fill="#8a8a46" opacity="0.85"/>
<rect x="929.6" y="615.2" width="1.6" height="1.3" fill="#8a8a46" opacity="0.85"/>
<rect x="919.1" y="609.2" width="1.6" height="1.3" fill="#8a8a46" opacity="0.85"/>
<rect x="938.9" y="600.5" width="1.6" height="1.3" fill="#8a8a46" opacity="0.85"/>
<rect x="917.8" y="610.4" width="2.2" height="1.3" fill="#8a8a46" opacity="0.85"/>
<rect x="935.6" y="601.8" width="2.2" height="1.3" fill="#8a8a46" opacity="0.85"/>
<rect x="938.7" y="605.8" width="2.2" height="1.3" fill="#8a8a46" opacity="0.85"/>
<rect x="935.9" y="601.0" width="2.2" height="1.3" fill="#8a8a46" opacity="0.85"/>
<rect x="930.9" y="614.6" width="1.6" height="1.3" fill="#8a8a46" opacity="0.85"/>
<rect x="931.7" y="604.6" width="1.2" height="1.3" fill="#8a8a46" opacity="0.85"/>
<rect x="928.6" y="612.2" width="1.6" height="1.3" fill="#8a8a46" opacity="0.85"/>
<rect x="926.8" y="604.2" width="1.2" height="1.3" fill="#8a8a46" opacity="0.85"/>
<rect x="932.2" y="607.2" width="1.2" height="1.3" fill="#8a8a46" opacity="0.85"/>
<rect x="928.9" y="611.4" width="1.6" height="1.3" fill="#8a8a46" opacity="0.85"/>
<rect x="939.2" y="607.1" width="1.6" height="1.3" fill="#8a8a46" opacity="0.85"/>
<rect x="916.5" y="608.9" width="1.6" height="1.3" fill="#8a8a46" opacity="0.85"/>
<rect x="928.2" y="615.1" width="2.2" height="1.3" fill="#8a8a46" opacity="0.85"/>
<rect x="925.9" y="602.2" width="2.2" height="1.3" fill="#8a8a46" opacity="0.85"/>
<rect x="923.3" y="620.0" width="1.6" height="1.3" fill="#8a8a46" opacity="0.85"/>
<rect x="936.3" y="605.3" width="1.2" height="1.3" fill="#8a8a46" opacity="0.85"/>
<rect x="937.8" y="609.6" width="2.2" height="1.3" fill="#8a8a46" opacity="0.85"/>
<rect x="939.2" y="600.3" width="1.2" height="1.3" fill="#8a8a46" opacity="0.85"/>
<rect x="942.5" y="603.6" width="1.2" height="1.3" fill="#8a8a46" opacity="0.85"/>
<rect x="925.3" y="620.0" width="1.6" height="1.3" fill="#8a8a46" opacity="0.85"/>
<rect x="926.4" y="616.3" width="1.2" height="1.3" fill="#8a8a46" opacity="0.85"/>
<rect x="935.3" y="608.9" width="1.2" height="1.3" fill="#8a8a46" opacity="0.85"/>
<rect x="917.2" y="612.7" width="1.6" height="1.3" fill="#8a8a46" opacity="0.85"/>
<rect x="923.8" y="619.3" width="1.6" height="1.3" fill="#8a8a46" opacity="0.85"/>
<rect x="939.2" y="603.1" width="1.6" height="1.3" fill="#8a8a46" opacity="0.85"/>
<rect x="932.6" y="614.9" width="1.2" height="1.3" fill="#8a8a46" opacity="0.85"/>
<rect x="932.4" y="609.2" width="1.2" height="1.3" fill="#8a8a46" opacity="0.85"/>
<rect x="921.1" y="604.7" width="1.2" height="1.3" fill="#8a8a46" opacity="0.85"/>
<rect x="927.9" y="612.2" width="1.6" height="1.3" fill="#8a8a46" opacity="0.85"/>
<rect x="936.2" y="611.1" width="1.2" height="1.3" fill="#8a8a46" opacity="0.85"/>
<rect x="935.3" y="602.7" width="2.2" height="1.3" fill="#8a8a46" opacity="0.85"/>
<rect x="920.7" y="620.2" width="1.6" height="1.3" fill="#8a8a46" opacity="0.85"/>
<rect x="931.2" y="609.3" width="1.2" height="1.3" fill="#8a8a46" opacity="0.85"/>
<rect x="923.3" y="612.8" width="1.6" height="1.3" fill="#8a8a46" opacity="0.85"/>
<rect x="934.5" y="604.3" width="1.6" height="1.3" fill="#8a8a46" opacity="0.85"/>
<rect x="941.8" y="602.7" width="1.6" height="1.3" fill="#8a8a46" opacity="0.85"/>
<rect x="921.7" y="605.2" width="1.2" height="1.3" fill="#8a8a46" opacity="0.85"/>
<rect x="923.1" y="616.8" width="1.2" height="1.3" fill="#8a8a46" opacity="0.85"/>
<ellipse cx="913.8" cy="618.4" rx="8.0" ry="8.6" fill="#727890" stroke="#ffff00" stroke-width="1.6" transform="rotate(-25 913.8 618.4)"/>
<path d="M914.8 618.4 Q918.4 619.3 917.8 623.4" fill="none" stroke="#7fa6c8" stroke-width="1.0"/>
<path d="M914.1 619.4 Q914.3 623.1 910.2 623.7" fill="none" stroke="#7fa6c8" stroke-width="1.0"/>
<path d="M913.0 619.0 Q909.5 620.3 907.6 616.6" fill="none" stroke="#7fa6c8" stroke-width="1.0"/>
<path d="M913.0 617.8 Q910.6 614.9 913.6 612.0" fill="none" stroke="#7fa6c8" stroke-width="1.0"/>
<path d="M914.1 617.5 Q916.2 614.3 919.8 616.2" fill="none" stroke="#7fa6c8" stroke-width="1.0"/>
<line x1="817.0" y1="126.2" x2="408.0" y2="410.7" stroke="#1c1cf4" stroke-width="1.3" />
<line x1="817.0" y1="126.2" x2="1419.0" y2="350.7" stroke="#1c1cf4" stroke-width="1.3" />
<line x1="1419.0" y1="350.7" x2="1010.0" y2="635.2" stroke="#1c1cf4" stroke-width="1.3" />
<line x1="408.0" y1="410.7" x2="897.0" y2="593.1" stroke="#1c1cf4" stroke-width="1.3" />
<line x1="897.0" y1="593.1" x2="921.0" y2="602.0" stroke="#1c1cf4" stroke-width="1.3" stroke-dasharray="2 5"/>
<line x1="921.0" y1="602.0" x2="1010.0" y2="635.2" stroke="#1c1cf4" stroke-width="1.3" />
<line x1="817.0" y1="126.2" x2="817.0" y2="141.7" stroke="#1c1cf4" stroke-width="1.3" />
<line x1="1010.0" y1="635.2" x2="1010.0" y2="667.2" stroke="#1c1cf4" stroke-width="1.3" />
<line x1="1419.0" y1="350.7" x2="1419.0" y2="366.7" stroke="#1c1cf4" stroke-width="1.3" />
<line x1="1010.0" y1="667.2" x2="1419.0" y2="385.2" stroke="#1c1cf4" stroke-width="1.3" />
<line x1="408.0" y1="442.7" x2="710.0" y2="555.3" stroke="#1c1cf4" stroke-width="1.2" />
<line x1="755.0" y1="572.1" x2="788.0" y2="584.4" stroke="#1c1cf4" stroke-width="1.2" stroke-dasharray="4 3 1.5 3"/>
<line x1="840.5" y1="604.0" x2="867.0" y2="613.9" stroke="#1c1cf4" stroke-width="1.2" stroke-dasharray="4 3 1.5 3"/>
<line x1="910.0" y1="629.9" x2="938.0" y2="640.3" stroke="#1c1cf4" stroke-width="1.2" stroke-dasharray="4 3 1.5 3"/>
<line x1="1003.0" y1="664.6" x2="1010.0" y2="667.2" stroke="#1c1cf4" stroke-width="1.2" />
<rect x="816.2" y="154.6" width="1.8" height="1.6" fill="#1c1cf4"/>
<rect x="821.2" y="160.0" width="1.8" height="1.6" fill="#1c1cf4"/>
<rect x="823.7" y="160.8" width="1.8" height="1.6" fill="#1c1cf4"/>
<rect x="826.2" y="161.7" width="1.8" height="1.6" fill="#1c1cf4"/>
<rect x="797.2" y="170.2" width="1.8" height="1.6" fill="#1c1cf4"/>
<rect x="680.2" y="252.7" width="1.8" height="1.6" fill="#1c1cf4"/>
<rect x="617.9" y="295.0" width="1.8" height="1.6" fill="#1c1cf4"/>
<line x1="913.4" y1="407.6" x2="913.4" y2="418.6" stroke="#2020e0" stroke-width="1.3"/>
<line x1="907.4" y1="411.6" x2="918.4" y2="416.6" stroke="#10b040" stroke-width="1.3"/>
<line x1="908.4" y1="416.6" x2="918.4" y2="410.6" stroke="#e02020" stroke-width="1.3"/>
</svg>
<svg id="dlg" width="540" height="802" viewBox="0 0 540 802">
<rect x="10.60" y="13.00" width="523.80" height="797.00" fill="#d9d9d9" />
<polygon points="10.6,13.0 534.4,13.0 530.1999999999999,17.2 14.8,17.2 14.8,810 10.6,810" fill="#ffffff"/>
<polygon points="534.4,13.0 534.4,810 530.6,810 530.6,16.8" fill="#828282"/>
<polygon points="14.8,17.2 530.6,17.2 526.6,20.2 18.2,20.2 18.2,810 14.8,810" fill="#828282"/>
<polygon points="530.6,17.2 530.6,810 526.6,810 526.6,20.2" fill="#ffffff"/>
<rect x="18.20" y="20.20" width="508.60" height="24.70" fill="#0000ff" />
<rect x="487.80" y="25.00" width="16.80" height="15.00" fill="#d9d9d9" />
<polygon points="487.80,40.00 504.60,40.00 504.60,25.00 503.40,26.20 503.40,38.80 489.00,38.80" fill="#303030"/>
<polygon points="487.80,40.00 487.80,25.00 504.60,25.00 503.40,26.20 489.00,26.20 489.00,38.80" fill="#ffffff"/>
<rect x="508.00" y="25.00" width="16.80" height="15.00" fill="#d9d9d9" />
<polygon points="508.00,40.00 524.80,40.00 524.80,25.00 523.60,26.20 523.60,38.80 509.20,38.80" fill="#303030"/>
<polygon points="508.00,40.00 508.00,25.00 524.80,25.00 523.60,26.20 509.20,26.20 509.20,38.80" fill="#ffffff"/>
<rect x="490.30" y="35.30" width="12.20" height="2.70" fill="#000" />
<path d="M511.2 28.2 L522.2 37.2 M522.2 28.2 L511.2 37.2" stroke="#000" stroke-width="2.4" stroke-linecap="round"/>
<rect x="22.40" y="98.20" width="501.20" height="656.20" fill="#d9d9d9" />
<polygon points="22.40,754.40 523.60,754.40 523.60,98.20 521.40,100.40 521.40,752.20 24.60,752.20" fill="#8c8c8c"/>
<polygon points="22.40,754.40 22.40,98.20 523.60,98.20 521.40,100.40 24.60,100.40 24.60,752.20" fill="#ffffff"/>
<path d="M26.00 98.20 L26.00 80.90 Q26.00 77.90 29.00 77.90 L105.00 77.90 Q108.00 77.90 108.00 80.90 L108.00 98.20 Z" fill="#d9d9d9"/>
<path d="M26.70 98.20 L26.70 80.90 Q26.70 78.60 29.00 78.60 L105.00 78.60" fill="none" stroke="#ffffff" stroke-width="1.6"/>
<path d="M105.00 78.60 Q107.30 78.60 107.30 80.90 L107.30 98.20" fill="none" stroke="#707070" stroke-width="1.6"/>
<path d="M182.50 98.20 L182.50 80.90 Q182.50 77.90 185.50 77.90 L254.60 77.90 Q257.60 77.90 257.60 80.90 L257.60 98.20 Z" fill="#d9d9d9"/>
<path d="M183.20 98.20 L183.20 80.90 Q183.20 78.60 185.50 78.60 L254.60 78.60" fill="none" stroke="#ffffff" stroke-width="1.6"/>
<path d="M254.60 78.60 Q256.90 78.60 256.90 80.90 L256.90 98.20" fill="none" stroke="#707070" stroke-width="1.6"/>
<path d="M104.70 99.60 L104.70 78.70 Q104.70 75.70 107.70 75.70 L182.80 75.70 Q185.80 75.70 185.80 78.70 L185.80 99.60 Z" fill="#d9d9d9"/>
<path d="M105.40 99.60 L105.40 78.70 Q105.40 76.40 107.70 76.40 L182.80 76.40" fill="none" stroke="#ffffff" stroke-width="1.6"/>
<path d="M182.80 76.40 Q185.10 76.40 185.10 78.70 L185.10 99.60" fill="none" stroke="#707070" stroke-width="1.6"/>
<rect x="44.90" y="116.60" width="16.40" height="14.90" fill="#ffffff" />
<polygon points="44.90,131.50 61.30,131.50 61.30,116.60 58.90,119.00 58.90,129.10 47.30,129.10" fill="#f0f0f0"/>
<polygon points="44.90,131.50 44.90,116.60 61.30,116.60 58.90,119.00 47.30,119.00 47.30,129.10" fill="#3c3c3c"/>
<path d="M48.80 123.20 L52.00 126.60 L57.50 121.10" fill="none" stroke="#000" stroke-width="2.5" stroke-linejoin="miter"/>
<rect x="43.00" y="148.00" width="460.30" height="45.20" fill="none" stroke="#ffffff" stroke-width="1.4"/>
<rect x="41.60" y="146.60" width="460.30" height="45.20" fill="none" stroke="#8a8a8a" stroke-width="1.4"/>
<rect x="53.50" y="144.60" width="136.40" height="6.00" fill="#d9d9d9" />
<rect x="56.50" y="167.80" width="16.40" height="14.90" fill="#ffffff" />
<polygon points="56.50,182.70 72.90,182.70 72.90,167.80 70.50,170.20 70.50,180.30 58.90,180.30" fill="#f0f0f0"/>
<polygon points="56.50,182.70 56.50,167.80 72.90,167.80 70.50,170.20 58.90,170.20 58.90,180.30" fill="#3c3c3c"/>
<path d="M60.40 174.40 L63.60 177.80 L69.10 172.30" fill="none" stroke="#000" stroke-width="2.5" stroke-linejoin="miter"/>
<rect x="154.00" y="167.80" width="16.40" height="14.90" fill="#ffffff" />
<polygon points="154.00,182.70 170.40,182.70 170.40,167.80 168.00,170.20 168.00,180.30 156.40,180.30" fill="#f0f0f0"/>
<polygon points="154.00,182.70 154.00,167.80 170.40,167.80 168.00,170.20 156.40,170.20 156.40,180.30" fill="#3c3c3c"/>
<rect x="251.40" y="167.80" width="16.40" height="14.90" fill="#ffffff" />
<polygon points="251.40,182.70 267.80,182.70 267.80,167.80 265.40,170.20 265.40,180.30 253.80,180.30" fill="#f0f0f0"/>
<polygon points="251.40,182.70 251.40,167.80 267.80,167.80 265.40,170.20 253.80,170.20 253.80,180.30" fill="#3c3c3c"/>
<rect x="43.00" y="206.00" width="460.30" height="45.80" fill="none" stroke="#ffffff" stroke-width="1.4"/>
<rect x="41.60" y="204.60" width="460.30" height="45.80" fill="none" stroke="#8a8a8a" stroke-width="1.4"/>
<rect x="53.50" y="202.60" width="123.40" height="6.00" fill="#d9d9d9" />
<rect x="56.50" y="226.80" width="16.40" height="14.90" fill="#ffffff" />
<polygon points="56.50,241.70 72.90,241.70 72.90,226.80 70.50,229.20 70.50,239.30 58.90,239.30" fill="#f0f0f0"/>
<polygon points="56.50,241.70 56.50,226.80 72.90,226.80 70.50,229.20 58.90,229.20 58.90,239.30" fill="#3c3c3c"/>
<path d="M60.40 233.40 L63.60 236.80 L69.10 231.30" fill="none" stroke="#000" stroke-width="2.5" stroke-linejoin="miter"/>
<rect x="131.30" y="226.80" width="16.40" height="14.90" fill="#ffffff" />
<polygon points="131.30,241.70 147.70,241.70 147.70,226.80 145.30,229.20 145.30,239.30 133.70,239.30" fill="#f0f0f0"/>
<polygon points="131.30,241.70 131.30,226.80 147.70,226.80 145.30,229.20 133.70,229.20 133.70,239.30" fill="#3c3c3c"/>
<rect x="289.90" y="226.80" width="16.40" height="14.90" fill="#ffffff" />
<polygon points="289.90,241.70 306.30,241.70 306.30,226.80 303.90,229.20 303.90,239.30 292.30,239.30" fill="#f0f0f0"/>
<polygon points="289.90,241.70 289.90,226.80 306.30,226.80 303.90,229.20 292.30,229.20 292.30,239.30" fill="#3c3c3c"/>
<rect x="43.00" y="264.20" width="460.30" height="126.80" fill="none" stroke="#ffffff" stroke-width="1.4"/>
<rect x="41.60" y="262.80" width="460.30" height="126.80" fill="none" stroke="#8a8a8a" stroke-width="1.4"/>
<rect x="53.50" y="260.80" width="184.90" height="6.00" fill="#d9d9d9" />
<circle cx="64.20" cy="292.30" r="6.6" fill="#ffffff"/>
<path d="M59.25 297.25 A7.00 7.00 0 0 0 69.15 287.35" fill="none" stroke="#f4f4f4" stroke-width="1.6"/>
<path d="M60.23 297.29 A6.40 6.40 0 0 1 69.19 288.33" fill="none" stroke="#383838" stroke-width="2.3"/>
<circle cx="126.40" cy="292.30" r="6.6" fill="#ffffff"/>
<path d="M121.45 297.25 A7.00 7.00 0 0 0 131.35 287.35" fill="none" stroke="#f4f4f4" stroke-width="1.6"/>
<path d="M122.43 297.29 A6.40 6.40 0 0 1 131.39 288.33" fill="none" stroke="#383838" stroke-width="2.3"/>
<polygon points="123.90,292.30 126.40,289.90 128.90,292.30 126.40,294.70" fill="#000" stroke="#000" stroke-width="0.8" stroke-linejoin="round"/>
<circle cx="285.00" cy="292.30" r="6.6" fill="#ffffff"/>
<path d="M280.05 297.25 A7.00 7.00 0 0 0 289.95 287.35" fill="none" stroke="#f4f4f4" stroke-width="1.6"/>
<path d="M281.03 297.29 A6.40 6.40 0 0 1 289.99 288.33" fill="none" stroke="#383838" stroke-width="2.3"/>
<rect x="56.50" y="310.80" width="16.40" height="14.90" fill="#ffffff" />
<polygon points="56.50,325.70 72.90,325.70 72.90,310.80 70.50,313.20 70.50,323.30 58.90,323.30" fill="#f0f0f0"/>
<polygon points="56.50,325.70 56.50,310.80 72.90,310.80 70.50,313.20 58.90,313.20 58.90,323.30" fill="#3c3c3c"/>
<rect x="56.50" y="336.00" width="16.40" height="14.90" fill="#ffffff" />
<polygon points="56.50,350.90 72.90,350.90 72.90,336.00 70.50,338.40 70.50,348.50 58.90,348.50" fill="#f0f0f0"/>
<polygon points="56.50,350.90 56.50,336.00 72.90,336.00 70.50,338.40 58.90,338.40 58.90,348.50" fill="#3c3c3c"/>
<rect x="213.40" y="360.60" width="21.20" height="18.60" fill="#ffff00" />
<polygon points="213.40,379.20 234.60,379.20 234.60,360.60 233.20,362.00 233.20,377.80 214.80,377.80" fill="#202020"/>
<polygon points="213.40,379.20 213.40,360.60 234.60,360.60 233.20,362.00 214.80,362.00 214.80,377.80" fill="#ffffff"/>
<polygon points="214.80,377.80 233.20,377.80 233.20,362.00 231.80,363.40 231.80,376.40 216.20,376.40" fill="#707070"/>
<polygon points="214.80,377.80 214.80,362.00 233.20,362.00 231.80,363.40 216.20,363.40 216.20,376.40" fill="#ffff00"/>
<rect x="402.00" y="360.60" width="21.20" height="18.60" fill="#e0e0f8" />
<polygon points="402.00,379.20 423.20,379.20 423.20,360.60 421.80,362.00 421.80,377.80 403.40,377.80" fill="#202020"/>
<polygon points="402.00,379.20 402.00,360.60 423.20,360.60 421.80,362.00 403.40,362.00 403.40,377.80" fill="#ffffff"/>
<polygon points="403.40,377.80 421.80,377.80 421.80,362.00 420.40,363.40 420.40,376.40 404.80,376.40" fill="#707070"/>
<polygon points="403.40,377.80 403.40,362.00 421.80,362.00 420.40,363.40 404.80,363.40 404.80,376.40" fill="#e0e0f8"/>
<rect x="43.00" y="403.60" width="460.30" height="127.60" fill="none" stroke="#ffffff" stroke-width="1.4"/>
<rect x="41.60" y="402.20" width="460.30" height="127.60" fill="none" stroke="#8a8a8a" stroke-width="1.4"/>
<rect x="53.50" y="400.20" width="136.40" height="6.00" fill="#d9d9d9" />
<circle cx="64.20" cy="431.20" r="6.6" fill="#ffffff"/>
<path d="M59.25 436.15 A7.00 7.00 0 0 0 69.15 426.25" fill="none" stroke="#f4f4f4" stroke-width="1.6"/>
<path d="M60.23 436.19 A6.40 6.40 0 0 1 69.19 427.23" fill="none" stroke="#383838" stroke-width="2.3"/>
<polygon points="61.70,431.20 64.20,428.80 66.70,431.20 64.20,433.60" fill="#000" stroke="#000" stroke-width="0.8" stroke-linejoin="round"/>
<circle cx="122.80" cy="431.20" r="6.6" fill="#ffffff"/>
<path d="M117.85 436.15 A7.00 7.00 0 0 0 127.75 426.25" fill="none" stroke="#f4f4f4" stroke-width="1.6"/>
<path d="M118.83 436.19 A6.40 6.40 0 0 1 127.79 427.23" fill="none" stroke="#383838" stroke-width="2.3"/>
<circle cx="245.60" cy="431.20" r="6.6" fill="#ffffff"/>
<path d="M240.65 436.15 A7.00 7.00 0 0 0 250.55 426.25" fill="none" stroke="#f4f4f4" stroke-width="1.6"/>
<path d="M241.63 436.19 A6.40 6.40 0 0 1 250.59 427.23" fill="none" stroke="#383838" stroke-width="2.3"/>
<rect x="56.50" y="449.40" width="16.40" height="14.90" fill="#ffffff" />
<polygon points="56.50,464.30 72.90,464.30 72.90,449.40 70.50,451.80 70.50,461.90 58.90,461.90" fill="#f0f0f0"/>
<polygon points="56.50,464.30 56.50,449.40 72.90,449.40 70.50,451.80 58.90,451.80 58.90,461.90" fill="#3c3c3c"/>
<rect x="56.50" y="474.60" width="16.40" height="14.90" fill="#ffffff" />
<polygon points="56.50,489.50 72.90,489.50 72.90,474.60 70.50,477.00 70.50,487.10 58.90,487.10" fill="#f0f0f0"/>
<polygon points="56.50,489.50 56.50,474.60 72.90,474.60 70.50,477.00 58.90,477.00 58.90,487.10" fill="#3c3c3c"/>
<rect x="239.40" y="469.20" width="252.00" height="26.00" fill="#ececec" />
<rect x="242.20" y="472.00" width="246.40" height="20.40" fill="#d9d9d9" />
<rect x="243.20" y="473.00" width="244.40" height="18.40" fill="#c6c6c6" />
<polygon points="243.20,491.40 487.60,491.40 487.60,473.00 486.20,474.40 486.20,490.00 244.60,490.00" fill="#f4f4f4"/>
<polygon points="243.20,491.40 243.20,473.00 487.60,473.00 486.20,474.40 244.60,474.40 244.60,490.00" fill="#8a8a8a"/>
<rect x="346.80" y="474.60" width="38.40" height="16.00" fill="#dcdcdc" />
<polygon points="346.80,490.60 385.20,490.60 385.20,474.60 383.30,476.50 383.30,488.70 348.70,488.70" fill="#000"/>
<polygon points="346.80,490.60 346.80,474.60 385.20,474.60 383.30,476.50 348.70,476.50 348.70,488.70" fill="#ffffff"/>
<polygon points="348.20,489.20 383.80,489.20 383.80,476.00 382.60,477.20 382.60,488.00 349.40,488.00" fill="#8a8a8a"/>
<polygon points="348.20,489.20 348.20,476.00 383.80,476.00 382.60,477.20 349.40,477.20 349.40,488.00" fill="#ececec"/>
<line x1="365.30" y1="475.60" x2="365.30" y2="489.60" stroke="#505050" stroke-width="1.4"/>
<line x1="366.70" y1="475.60" x2="366.70" y2="489.60" stroke="#ffffff" stroke-width="1.4"/>
<rect x="199.50" y="501.00" width="21.10" height="18.60" fill="#666666" />
<polygon points="199.50,519.60 220.60,519.60 220.60,501.00 219.20,502.40 219.20,518.20 200.90,518.20" fill="#202020"/>
<polygon points="199.50,519.60 199.50,501.00 220.60,501.00 219.20,502.40 200.90,502.40 200.90,518.20" fill="#ffffff"/>
<polygon points="200.90,518.20 219.20,518.20 219.20,502.40 217.80,503.80 217.80,516.80 202.30,516.80" fill="#707070"/>
<polygon points="200.90,518.20 200.90,502.40 219.20,502.40 217.80,503.80 202.30,503.80 202.30,516.80" fill="#666666"/>
<rect x="43.00" y="543.60" width="460.30" height="155.40" fill="none" stroke="#ffffff" stroke-width="1.4"/>
<rect x="41.60" y="542.20" width="460.30" height="155.40" fill="none" stroke="#8a8a8a" stroke-width="1.4"/>
<rect x="53.50" y="540.20" width="113.50" height="6.00" fill="#d9d9d9" />
<rect x="157.00" y="561.40" width="230.00" height="27.00" fill="#ffffff" />
<polygon points="157.00,588.40 387.00,588.40 387.00,561.40 385.80,562.60 385.80,587.20 158.20,587.20" fill="#f0f0f0"/>
<polygon points="157.00,588.40 157.00,561.40 387.00,561.40 385.80,562.60 158.20,562.60 158.20,587.20" fill="#6e6e6e"/>
<polygon points="158.00,587.20 385.80,587.20 385.80,562.40 384.10,564.10 384.10,585.50 159.70,585.50" fill="#ffffff"/>
<polygon points="158.00,587.20 158.00,562.40 385.80,562.40 384.10,564.10 159.70,564.10 159.70,585.50" fill="#2c2c2c"/>
<rect x="371.40" y="564.00" width="13.60" height="20.00" fill="#d2d2d2" />
<polygon points="371.40,584.00 385.00,584.00 385.00,564.00 383.60,565.40 383.60,582.60 372.80,582.60" fill="#2c2c2c"/>
<polygon points="371.40,584.00 371.40,564.00 385.00,564.00 383.60,565.40 372.80,565.40 372.80,582.60" fill="#e6e6e6"/>
<polygon points="372.8,570.2 382.4,570.2 377.6,575.4" fill="#000"/>
<rect x="395.20" y="560.80" width="97.60" height="30.00" fill="#d9d9d9" />
<polygon points="395.20,590.80 492.80,590.80 492.80,560.80 491.30,562.30 491.30,589.30 396.70,589.30" fill="#262626"/>
<polygon points="395.20,590.80 395.20,560.80 492.80,560.80 491.30,562.30 396.70,562.30 396.70,589.30" fill="#ffffff"/>
<polygon points="396.70,589.30 491.30,589.30 491.30,562.30 490.30,563.30 490.30,588.30 397.70,588.30" fill="#5a5a5a"/>
<polygon points="396.70,589.30 396.70,562.30 491.30,562.30 490.30,563.30 397.70,563.30 397.70,588.30" fill="#f0f0f0"/>
<rect x="316.60" y="592.60" width="27.20" height="50.00" fill="#cdcdcd" />
<rect x="404.20" y="592.60" width="28.20" height="50.00" fill="#cdcdcd" />
<rect x="83.80" y="593.60" width="50.00" height="22.60" fill="#ffffff" />
<polygon points="83.80,616.20 133.80,616.20 133.80,593.60 132.60,594.80 132.60,615.00 85.00,615.00" fill="#f0f0f0"/>
<polygon points="83.80,616.20 83.80,593.60 133.80,593.60 132.60,594.80 85.00,594.80 85.00,615.00" fill="#6e6e6e"/>
<polygon points="84.80,615.00 132.60,615.00 132.60,594.60 130.90,596.30 130.90,613.30 86.50,613.30" fill="#ffffff"/>
<polygon points="84.80,615.00 84.80,594.60 132.60,594.60 130.90,596.30 86.50,596.30 86.50,613.30" fill="#2c2c2c"/>
<rect x="175.20" y="593.60" width="50.00" height="22.60" fill="#ffffff" />
<polygon points="175.20,616.20 225.20,616.20 225.20,593.60 224.00,594.80 224.00,615.00 176.40,615.00" fill="#f0f0f0"/>
<polygon points="175.20,616.20 175.20,593.60 225.20,593.60 224.00,594.80 176.40,594.80 176.40,615.00" fill="#6e6e6e"/>
<polygon points="176.20,615.00 224.00,615.00 224.00,594.60 222.30,596.30 222.30,613.30 177.90,613.30" fill="#ffffff"/>
<polygon points="176.20,615.00 176.20,594.60 224.00,594.60 222.30,596.30 177.90,596.30 177.90,613.30" fill="#2c2c2c"/>
<rect x="265.60" y="593.60" width="50.00" height="22.60" fill="#ffffff" />
<polygon points="265.60,616.20 315.60,616.20 315.60,593.60 314.40,594.80 314.40,615.00 266.80,615.00" fill="#f0f0f0"/>
<polygon points="265.60,616.20 265.60,593.60 315.60,593.60 314.40,594.80 266.80,594.80 266.80,615.00" fill="#6e6e6e"/>
<polygon points="266.60,615.00 314.40,615.00 314.40,594.60 312.70,596.30 312.70,613.30 268.30,613.30" fill="#ffffff"/>
<polygon points="266.60,615.00 266.60,594.60 314.40,594.60 312.70,596.30 268.30,596.30 268.30,613.30" fill="#2c2c2c"/>
<rect x="343.80" y="593.60" width="59.00" height="22.60" fill="#efefef" />
<polygon points="343.80,616.20 402.80,616.20 402.80,593.60 401.40,595.00 401.40,614.80 345.20,614.80" fill="#ffffff"/>
<polygon points="343.80,616.20 343.80,593.60 402.80,593.60 401.40,595.00 345.20,595.00 345.20,614.80" fill="#a4a4a4"/>
<polygon points="345.20,614.80 401.40,614.80 401.40,595.00 400.20,596.20 400.20,613.60 346.40,613.60" fill="#e8e8e8"/>
<polygon points="345.20,614.80 345.20,595.00 401.40,595.00 400.20,596.20 346.40,596.20 346.40,613.60" fill="#8c8c8c"/>
<rect x="432.40" y="593.60" width="59.00" height="22.60" fill="#efefef" />
<polygon points="432.40,616.20 491.40,616.20 491.40,593.60 490.00,595.00 490.00,614.80 433.80,614.80" fill="#ffffff"/>
<polygon points="432.40,616.20 432.40,593.60 491.40,593.60 490.00,595.00 433.80,595.00 433.80,614.80" fill="#a4a4a4"/>
<polygon points="433.80,614.80 490.00,614.80 490.00,595.00 488.80,596.20 488.80,613.60 435.00,613.60" fill="#e8e8e8"/>
<polygon points="433.80,614.80 433.80,595.00 490.00,595.00 488.80,596.20 435.00,596.20 435.00,613.60" fill="#8c8c8c"/>
<rect x="83.80" y="619.00" width="50.00" height="22.60" fill="#ffffff" />
<polygon points="83.80,641.60 133.80,641.60 133.80,619.00 132.60,620.20 132.60,640.40 85.00,640.40" fill="#f0f0f0"/>
<polygon points="83.80,641.60 83.80,619.00 133.80,619.00 132.60,620.20 85.00,620.20 85.00,640.40" fill="#6e6e6e"/>
<polygon points="84.80,640.40 132.60,640.40 132.60,620.00 130.90,621.70 130.90,638.70 86.50,638.70" fill="#ffffff"/>
<polygon points="84.80,640.40 84.80,620.00 132.60,620.00 130.90,621.70 86.50,621.70 86.50,638.70" fill="#2c2c2c"/>
<rect x="175.20" y="619.00" width="50.00" height="22.60" fill="#ffffff" />
<polygon points="175.20,641.60 225.20,641.60 225.20,619.00 224.00,620.20 224.00,640.40 176.40,640.40" fill="#f0f0f0"/>
<polygon points="175.20,641.60 175.20,619.00 225.20,619.00 224.00,620.20 176.40,620.20 176.40,640.40" fill="#6e6e6e"/>
<polygon points="176.20,640.40 224.00,640.40 224.00,620.00 222.30,621.70 222.30,638.70 177.90,638.70" fill="#ffffff"/>
<polygon points="176.20,640.40 176.20,620.00 224.00,620.00 222.30,621.70 177.90,621.70 177.90,638.70" fill="#2c2c2c"/>
<rect x="265.60" y="619.00" width="50.00" height="22.60" fill="#ffffff" />
<polygon points="265.60,641.60 315.60,641.60 315.60,619.00 314.40,620.20 314.40,640.40 266.80,640.40" fill="#f0f0f0"/>
<polygon points="265.60,641.60 265.60,619.00 315.60,619.00 314.40,620.20 266.80,620.20 266.80,640.40" fill="#6e6e6e"/>
<polygon points="266.60,640.40 314.40,640.40 314.40,620.00 312.70,621.70 312.70,638.70 268.30,638.70" fill="#ffffff"/>
<polygon points="266.60,640.40 266.60,620.00 314.40,620.00 312.70,621.70 268.30,621.70 268.30,638.70" fill="#2c2c2c"/>
<rect x="343.80" y="619.00" width="59.00" height="22.60" fill="#efefef" />
<polygon points="343.80,641.60 402.80,641.60 402.80,619.00 401.40,620.40 401.40,640.20 345.20,640.20" fill="#ffffff"/>
<polygon points="343.80,641.60 343.80,619.00 402.80,619.00 401.40,620.40 345.20,620.40 345.20,640.20" fill="#a4a4a4"/>
<polygon points="345.20,640.20 401.40,640.20 401.40,620.40 400.20,621.60 400.20,639.00 346.40,639.00" fill="#e8e8e8"/>
<polygon points="345.20,640.20 345.20,620.40 401.40,620.40 400.20,621.60 346.40,621.60 346.40,639.00" fill="#8c8c8c"/>
<rect x="432.40" y="619.00" width="59.00" height="22.60" fill="#efefef" />
<polygon points="432.40,641.60 491.40,641.60 491.40,619.00 490.00,620.40 490.00,640.20 433.80,640.20" fill="#ffffff"/>
<polygon points="432.40,641.60 432.40,619.00 491.40,619.00 490.00,620.40 433.80,620.40 433.80,640.20" fill="#a4a4a4"/>
<polygon points="433.80,640.20 490.00,640.20 490.00,620.40 488.80,621.60 488.80,639.00 435.00,639.00" fill="#e8e8e8"/>
<polygon points="433.80,640.20 433.80,620.40 490.00,620.40 488.80,621.60 435.00,621.60 435.00,639.00" fill="#8c8c8c"/>
<rect x="52.90" y="643.60" width="440.10" height="49.40" fill="#ececec" />
<rect x="55.70" y="646.40" width="434.50" height="43.80" fill="#d9d9d9" />
<rect x="0.00" y="0.00" width="0.00" height="0.00" fill="#ececec" />
<rect x="2.80" y="2.80" width="-5.60" height="-5.60" fill="#d9d9d9" />
<rect x="56.40" y="669.80" width="431.40" height="18.60" fill="#c6c6c6" />
<polygon points="56.40,688.40 487.80,688.40 487.80,669.80 486.40,671.20 486.40,687.00 57.80,687.00" fill="#f4f4f4"/>
<polygon points="56.40,688.40 56.40,669.80 487.80,669.80 486.40,671.20 57.80,671.20 57.80,687.00" fill="#8a8a8a"/>
<rect x="254.40" y="671.40" width="38.00" height="16.20" fill="#dcdcdc" />
<polygon points="254.40,687.60 292.40,687.60 292.40,671.40 290.50,673.30 290.50,685.70 256.30,685.70" fill="#000"/>
<polygon points="254.40,687.60 254.40,671.40 292.40,671.40 290.50,673.30 256.30,673.30 256.30,685.70" fill="#ffffff"/>
<polygon points="255.80,686.20 291.00,686.20 291.00,672.80 289.80,674.00 289.80,685.00 257.00,685.00" fill="#8a8a8a"/>
<polygon points="255.80,686.20 255.80,672.80 291.00,672.80 289.80,674.00 257.00,674.00 257.00,685.00" fill="#ececec"/>
<line x1="272.70" y1="672.40" x2="272.70" y2="686.60" stroke="#505050" stroke-width="1.4"/>
<line x1="274.10" y1="672.40" x2="274.10" y2="686.60" stroke="#ffffff" stroke-width="1.4"/>
<rect x="41.40" y="703.40" width="173.80" height="31.40" fill="#d9d9d9" />
<polygon points="41.40,734.80 215.20,734.80 215.20,703.40 213.70,704.90 213.70,733.30 42.90,733.30" fill="#262626"/>
<polygon points="41.40,734.80 41.40,703.40 215.20,703.40 213.70,704.90 42.90,704.90 42.90,733.30" fill="#ffffff"/>
<polygon points="42.90,733.30 213.70,733.30 213.70,704.90 212.70,705.90 212.70,732.30 43.90,732.30" fill="#5a5a5a"/>
<polygon points="42.90,733.30 42.90,704.90 213.70,704.90 212.70,705.90 43.90,705.90 43.90,732.30" fill="#f0f0f0"/>
<rect x="26.20" y="763.40" width="96.20" height="36.00" fill="#cdcdcd" />
<polygon points="26.20,799.40 122.40,799.40 122.40,763.40 120.90,764.90 120.90,797.90 27.70,797.90" fill="#262626"/>
<polygon points="26.20,799.40 26.20,763.40 122.40,763.40 120.90,764.90 27.70,764.90 27.70,797.90" fill="#ffffff"/>
<polygon points="27.70,797.90 120.90,797.90 120.90,764.90 119.90,765.90 119.90,796.90 28.70,796.90" fill="#5a5a5a"/>
<polygon points="27.70,797.90 27.70,764.90 120.90,764.90 119.90,765.90 28.70,765.90 28.70,796.90" fill="#f0f0f0"/>
<rect x="127.60" y="763.40" width="96.40" height="36.00" fill="#cdcdcd" />
<polygon points="127.60,799.40 224.00,799.40 224.00,763.40 222.50,764.90 222.50,797.90 129.10,797.90" fill="#262626"/>
<polygon points="127.60,799.40 127.60,763.40 224.00,763.40 222.50,764.90 129.10,764.90 129.10,797.90" fill="#ffffff"/>
<polygon points="129.10,797.90 222.50,797.90 222.50,764.90 221.50,765.90 221.50,796.90 130.10,796.90" fill="#5a5a5a"/>
<polygon points="129.10,797.90 129.10,764.90 222.50,764.90 221.50,765.90 130.10,765.90 130.10,796.90" fill="#f0f0f0"/>
<defs>
<linearGradient id="gchk" x1="0" y1="0" x2="0" y2="1"><stop offset="0" stop-color="#a8f070"/><stop offset="1" stop-color="#38b018"/></linearGradient>
<linearGradient id="gx" x1="0" y1="0" x2="0" y2="1"><stop offset="0" stop-color="#ff9c9c"/><stop offset="0.45" stop-color="#ee1010"/><stop offset="1" stop-color="#e00000"/></linearGradient>
<radialGradient id="gq" cx="0.4" cy="0.25" r="0.85"><stop offset="0" stop-color="#7aa8f8"/><stop offset="0.5" stop-color="#2058e0"/><stop offset="1" stop-color="#0828a8"/></radialGradient>
</defs>
<path d="M401.0 572.9 L405.7 581.6 L419.3 568.6" fill="none" stroke="#2c9c14" stroke-width="4.0" stroke-linecap="round" stroke-linejoin="round"/>
<path d="M401.0 572.9 L405.7 581.6 L419.3 568.6" fill="none" stroke="#78e048" stroke-width="2.2" stroke-linecap="round" stroke-linejoin="round"/>
<path d="M401.6 573.4 L405.6 580.4 L418.6 568.8" fill="none" stroke="#b4f488" stroke-width="0.9" stroke-linecap="round" stroke-linejoin="round"/>
<path d="M41.6 775.4 L56.0 787.0 M56.0 775.4 L41.6 787.0" fill="none" stroke="#c80808" stroke-width="6.2" stroke-linecap="round"/>
<path d="M41.6 775.4 L56.0 787.0 M56.0 775.4 L41.6 787.0" fill="none" stroke="url(#gx)" stroke-width="4.8" stroke-linecap="round"/>
<path d="M41.9 775.2 L46.6 779.0 M55.7 775.2 L51.0 779.0" fill="none" stroke="#ffd0d0" stroke-width="2.0" stroke-linecap="round" opacity="0.9"/>
<circle cx="153.9" cy="781.2" r="10.0" fill="url(#gq)" stroke="#0c2c9c" stroke-width="0.8"/>
<ellipse cx="152.8" cy="775.6" rx="6.6" ry="3.6" fill="#ffffff" opacity="0.28"/>
<path d="M150.4 778.0 Q150.6 774.2 154.1 774.2 Q157.6 774.3 157.5 777.4 Q157.4 779.4 155.4 780.6 Q153.9 781.6 153.9 783.6" fill="none" stroke="#ffffff" stroke-width="2.3" stroke-linecap="round"/>
<circle cx="153.9" cy="787.2" r="1.35" fill="#ffffff"/>
</svg>
<div id="txt">
<div class="t" style="left:27.40px;top:24.08px;color:#ffffff;font-weight:bold;letter-spacing:0.620px;">Mesh control</div>
<div class="t" style="left:26.40px;top:50.98px;letter-spacing:-0.065px;">Num elements:</div>
<div class="t" style="left:155.00px;top:50.98px;letter-spacing:-0.806px;">483757</div>
<div class="t" style="left:270.90px;top:50.98px;letter-spacing:0.028px;">Num nodes:</div>
<div class="t" style="left:377.60px;top:50.98px;letter-spacing:-0.746px;">528080</div>
<div class="t" style="left:33.90px;top:80.68px;letter-spacing:-0.119px;height:17.40px;overflow:hidden;">Settings</div>
<div class="t" style="left:115.10px;top:78.88px;letter-spacing:0.483px;">Display</div>
<div class="t" style="left:193.90px;top:80.68px;letter-spacing:-0.141px;height:17.40px;overflow:hidden;">Quality</div>
<div class="t" style="left:69.40px;top:114.08px;letter-spacing:0.209px;">Display mesh</div>
<div class="t" style="left:56.90px;top:136.18px;letter-spacing:0.044px;">Display attributes</div>
<div class="t" style="left:80.80px;top:166.08px;letter-spacing:-0.179px;">Surface</div>
<div class="t" style="left:178.10px;top:166.08px;letter-spacing:0.254px;">Volume</div>
<div class="t" style="left:276.30px;top:166.08px;letter-spacing:-0.263px;">Cut plane</div>
<div class="t" style="left:56.90px;top:194.18px;letter-spacing:0.193px;">Display options</div>
<div class="t" style="left:80.20px;top:224.28px;letter-spacing:0.125px;">Wire</div>
<div class="t" style="left:155.60px;top:224.28px;letter-spacing:0.005px;">Solid fill (object)</div>
<div class="t" style="left:314.20px;top:224.28px;letter-spacing:-0.031px;">Solid fill (plane)</div>
<div class="t" style="left:56.90px;top:252.38px;letter-spacing:0.121px;">Surface/volume options</div>
<div class="t" style="left:80.20px;top:282.98px;letter-spacing:-0.024px;">All</div>
<div class="t" style="left:143.20px;top:282.98px;letter-spacing:0.299px;">Selected object</div>
<div class="t" style="left:301.50px;top:282.98px;letter-spacing:0.274px;">Selected shape</div>
<div class="t" style="left:81.20px;top:308.08px;letter-spacing:-0.068px;">Restrict to plane</div>
<div class="t" style="left:81.20px;top:333.38px;letter-spacing:0.132px;">Color by object</div>
<div class="t" style="left:56.90px;top:358.68px;letter-spacing:0.016px;">Surface mesh color</div>
<div class="t" style="left:245.30px;top:358.68px;letter-spacing:0.188px;">Volume mesh color</div>
<div class="t" style="left:56.90px;top:391.78px;letter-spacing:-0.074px;">Cut plane options</div>
<div class="t" style="left:80.20px;top:421.88px;letter-spacing:-0.024px;">All</div>
<div class="t" style="left:139.60px;top:421.88px;letter-spacing:0.217px;">Solids only</div>
<div class="t" style="left:262.00px;top:421.88px;letter-spacing:0.100px;">Fluids only</div>
<div class="t" style="left:81.20px;top:446.98px;letter-spacing:0.132px;">Color by object</div>
<div class="t" style="left:81.20px;top:472.28px;letter-spacing:0.086px;">Plane transparency</div>
<div class="t" style="left:56.90px;top:498.68px;letter-spacing:0.081px;">Plane mesh color</div>
<div class="t" style="left:56.90px;top:531.78px;letter-spacing:0.092px;">Plane location</div>
<div class="t" style="left:56.90px;top:563.68px;letter-spacing:-0.007px;">Set position</div>
<div class="t" style="left:161.00px;top:564.08px;letter-spacing:-0.094px;">Point and normal</div>
<div class="t" style="left:427.10px;top:566.58px;letter-spacing:0.344px;">Update</div>
<div class="t" style="left:53.50px;top:595.98px;letter-spacing:-1.000px;">PX</div>
<div class="t" style="left:-169.18px;width:300px;text-align:right;top:595.98px;">0</div>
<div class="t" style="left:143.20px;top:595.98px;letter-spacing:-0.428px;">PY</div>
<div class="t" style="left:-77.78px;width:300px;text-align:right;top:595.98px;">0</div>
<div class="t" style="left:234.40px;top:595.98px;letter-spacing:-1.000px;">PZ</div>
<div class="t" style="left:267.20px;top:595.98px;width:46.40px;overflow:hidden;color:#000;letter-spacing:-0.25px">0.0150</div>
<div class="t" style="left:323.80px;top:595.98px;color:#b4b4b4;letter-spacing:0.744px;">A</div>
<div class="t" style="left:99.82px;width:300px;text-align:right;top:595.98px;color:#bdbdbd;">0</div>
<div class="t" style="left:412.50px;top:595.98px;color:#b4b4b4;letter-spacing:-1.000px;">B</div>
<div class="t" style="left:188.42px;width:300px;text-align:right;top:595.98px;color:#bdbdbd;">0</div>
<div class="t" style="left:53.50px;top:621.38px;letter-spacing:-1.000px;">NX</div>
<div class="t" style="left:-169.18px;width:300px;text-align:right;top:621.38px;">0</div>
<div class="t" style="left:143.20px;top:621.38px;letter-spacing:-0.952px;">NY</div>
<div class="t" style="left:-77.78px;width:300px;text-align:right;top:621.38px;">0</div>
<div class="t" style="left:234.40px;top:621.38px;letter-spacing:-1.000px;">NZ</div>
<div class="t" style="left:12.62px;width:300px;text-align:right;top:621.38px;">1</div>
<div class="t" style="left:323.80px;top:621.38px;color:#b4b4b4;letter-spacing:-0.296px;">C</div>
<div class="t" style="left:99.82px;width:300px;text-align:right;top:621.38px;color:#bdbdbd;">1</div>
<div class="t" style="left:412.50px;top:621.38px;color:#b4b4b4;letter-spacing:-0.096px;">D</div>
<div class="t" style="left:434.00px;top:621.38px;width:55.40px;overflow:hidden;color:#bdbdbd;letter-spacing:-0.25px">0.01500</div>
<div class="t" style="left:254.90px;top:649.08px;letter-spacing:-1.000px;">0.500</div>
<div class="t" style="left:53.50px;top:709.98px;color:#8c8c8c;letter-spacing:0.030px;">Component visibility</div>
<div class="t" style="left:66.20px;top:771.88px;letter-spacing:-0.106px;">Close</div>
<div class="t" style="left:171.10px;top:771.88px;letter-spacing:0.259px;">Help</div>
</div>
<div id="bl"></div>
</body></html>
